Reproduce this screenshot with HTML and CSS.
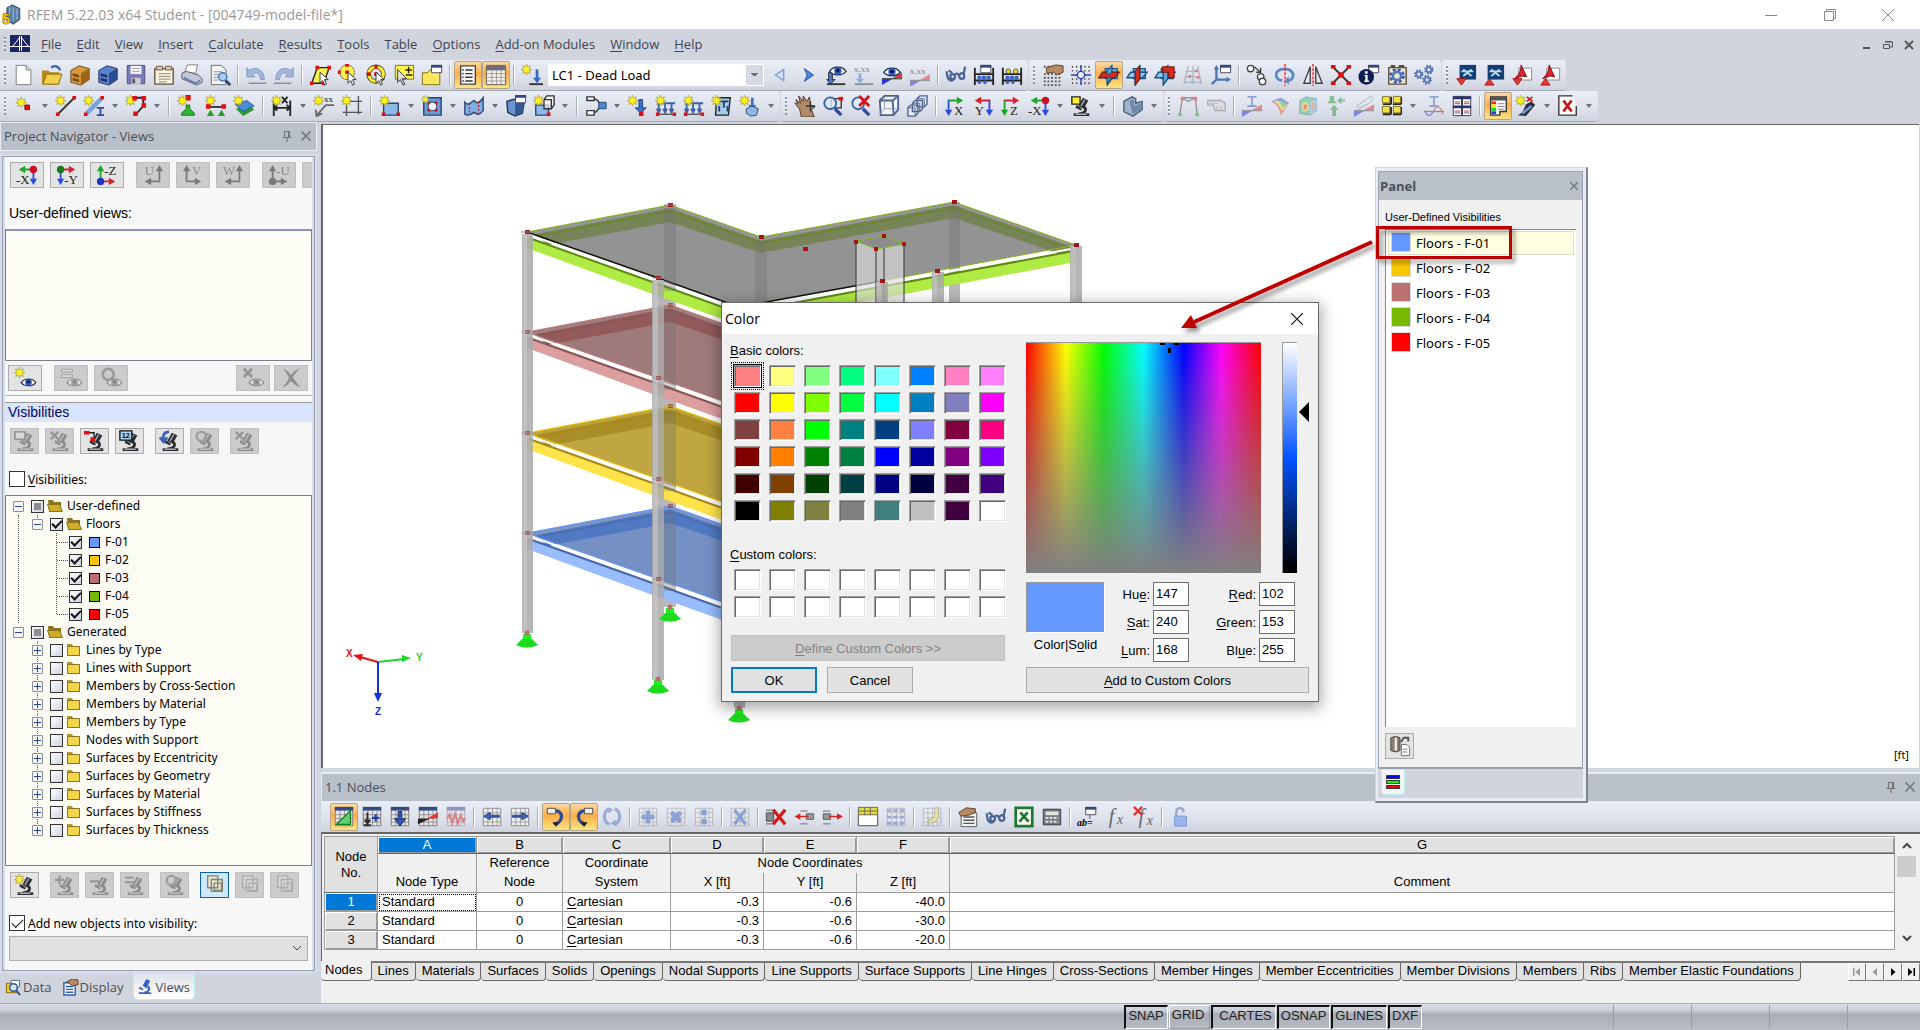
FILE: index.html
```html
<!DOCTYPE html>
<html lang="en">
<head>
<meta charset="utf-8">
<title>RFEM 5.22.03 x64 Student - [004749-model-file*]</title>
<link rel="stylesheet" href="styles.css">
</head>
<body>

<!-- icon library -->
<svg class="defs" aria-hidden="true">
<defs>
<g id="star"><path fill="#fff02a" stroke="#8b8b3c" stroke-width=".6" d="M6 0l1.200 3.200L10.500 2 8.800 5 12 6.200 8.800 7.400l1.500 3L7.200 9 6 12 4.800 9l-3.100 1.400 1.500-3L0 6.200 3.200 5 1.600 2l3.200 1.200z"/></g>
<g id="ar"><path d="M4 5h10V2l7 4-7 4V7H4z"/></g>
<g id="al"><path d="M20 5H10V2L3 6l7 4V7h10z"/></g>
<g id="ad"><path d="M4 6v10H1l4 7 4-7H6V6z"/></g>
<g id="scope"><path fill="#2b2f33" d="M4 20h17v3H4zM14 3l6 3-5 9-6-3zM7 11l6 4-1 2-6-3zM16 12c4 2 3 7-1 9H9v-2c6 0 7-2 6-5z"/><path stroke="#aab2b8" stroke-width="1.500" d="M16 5l-4 7M6 21h12"/></g>
<g id="eye"><path fill="#fff" stroke="#1c2c55" stroke-width="1.400" d="M3 9c4-6 14-6 18 0-4 5-14 5-18 0z"/><circle cx="12" cy="8.500" r="4" fill="#2c56b8"/><circle cx="12" cy="8" r="1.700" fill="#08102a"/></g>
<g id="flag"><path fill="#2b33d8" d="M1 23v-7l12 0z"/><path fill="#e33" d="M23 9v7H11z"/><path stroke="#555" stroke-width="1.500" d="M1 16h22"/></g>
<g id="cursor"><path fill="#fff" stroke="#333" d="M12 9v12l3-3 2 5 2-1-2-5h4z"/></g>
<g id="lens"><path stroke="#2d4c93" stroke-width="3.500" d="M14 15l7 7"/><circle cx="9" cy="9" r="6.500" fill="#dcebfa" fill-opacity=".8" stroke="#3a5fa8" stroke-width="2"/></g>
<g id="win"><path fill="#fff" stroke="#445" d="M11.500 1.500h11v8h-11z"/><path fill="#35477f" d="M11 1h12v3H11z"/></g>
<g id="sheet"><path fill="#e8e8e8" stroke="#777" d="M2.500 1.500h19v20h-19z"/><path stroke="#8a8a8a" d="M2 9.500h20M2 13.500h20M2 17.500h20M7.500 5v16M12.500 5v16M17.500 5v16"/><path fill="#344a85" d="M2 1h20v4H2z"/></g>
<g id="rows"><path fill="#efefef" stroke="#888" d="M2.500 2.500h19v19h-19z"/><path stroke="#999" d="M2 7.500h20M2 12.500h20M2 17.500h20M7.500 2v20M12.500 2v20M17.500 2v20"/></g>
<g id="abac"><path stroke="#222" stroke-width="2" d="M2 4v19M22 4v19M2 11h20M2 18h20"/><g fill="#3e68c8"><circle cx="7" cy="15" r="2.500"/><circle cx="12" cy="15" r="2.500"/><circle cx="17" cy="15" r="2.500"/><circle cx="7" cy="20" r="2"/><circle cx="13" cy="20" r="2"/></g></g>
<g id="dots" fill="#d11"><path d="M1 19h4v4H1zM19 1h4v4h-4z"/></g>
<g id="planes"><path fill="#6fb6e8" stroke="#1c5584" stroke-width="1.500" d="M8 5h13v11H8z"/><path fill="#8cc8f0" stroke="#1c5584" stroke-width="1.500" d="M5 9h18l-5 6H1z"/><path fill="#5ba3d8" stroke="#1c5584" stroke-width="1.500" d="M10 8l5-6v14l-5 7z"/></g>
<g id="gear"><circle cx="12" cy="12" r="7" fill="none" stroke="#3b5ea6" stroke-width="3" stroke-dasharray="3.100 2.400"/><circle cx="12" cy="12" r="4.500" fill="none" stroke="#5578bd" stroke-width="3"/></g>
<g id="cone"><path fill="#2fb52f" stroke="#147014" d="M10 11h4v4l5 5v2H5v-2l5-5z"/></g>
<g id="loads"><path fill="none" stroke="#3b62b0" stroke-width="2" d="M2 9h20M4 9v9M11 9v9M18 9v9M2 15l2 4 2-4M9 15l2 4 2-4M16 15l2 4 2-4"/><path fill="#d11" d="M1 19h4v4H1zM19 19h4v4h-4z"/><path stroke="#555" stroke-width="1.500" d="M5 21h14"/></g>
<g id="squares"><path fill="#e9e6d8" stroke="#85826f" stroke-width="1.500" d="M4 2h11v13H4zM8 6h12v13H8zM11 10h8v8h-8z"/></g>
</defs>
<symbol id="new" viewBox="0 0 24 24"><path fill="#fff" stroke="#777" d="M3.500 1.500h11l5 5v16h-16z"/><path fill="#ddd" stroke="#777" d="M14.500 1.500v5h5"/></symbol>
<symbol id="open" viewBox="0 0 24 24"><path fill="#b88d1c" d="M1 7h7l2 2h10v13H1z"/><path fill="#f3cf4a" stroke="#80600c" d="M2 22l4-11h17l-4 11z"/><path fill="none" stroke="#3462a8" stroke-width="2.500" d="M11 4c4-3 8-2 10 3"/></symbol>
<symbol id="cab" viewBox="0 0 24 24"><path fill="#d69a3c" stroke="#6b4310" d="M2 7l9-5 11 3v12l-9 6-11-3z"/><path fill="#9d6519" d="M13 10l9-5v12l-9 6z"/><path fill="#7a4b12" d="M4 10l7 2v3l-7-2zM4 15l7 2v3l-7-2z"/></symbol>
<symbol id="cabb" viewBox="0 0 24 24"><path fill="#5b82cd" stroke="#1b2d60" d="M2 7l9-5 11 3v12l-9 6-11-3z"/><path fill="#2e4c93" d="M13 10l9-5v12l-9 6z"/><path fill="#1d356e" d="M4 10l7 2v3l-7-2zM4 15l7 2v3l-7-2z"/></symbol>
<symbol id="save" viewBox="0 0 24 24"><path fill="#7d7ab8" stroke="#4b4880" d="M2.500 1.500h19v20h-19z"/><path fill="#f2f2f8" d="M6 2h12v9H6z"/><path fill="#c9c9d8" d="M7 15h10v7H7z"/><path stroke="#99a" d="M8 5h8M8 8h8"/><path fill="#556" d="M8 16h3v5H8z"/></symbol>
<symbol id="clip" viewBox="0 0 24 24"><path fill="#fbf4e3" stroke="#6a5338" stroke-width="1.500" d="M2 5h20v17H2z"/><path fill="#d8ccb2" stroke="#6a5338" d="M3.500 2.500h7v4h-7zM13.500 2.500h7v4h-7z"/><path stroke="#8a8172" d="M6 10.500h13M6 13.500h13M6 16.500h13M6 19.500h9"/></symbol>
<symbol id="print" viewBox="0 0 24 24"><path fill="#fff" stroke="#778" d="M4 9L7 1h11l-2 9z"/><path fill="#c4c8d4" stroke="#556" d="M1 10l5-2 13 4 4 4v4l-6 3-16-7z"/><path fill="#667bb5" d="M3 14l13 6 5-3v2l-5 3-13-6z"/></symbol>
<symbol id="preview" viewBox="0 0 24 24"><path fill="#f4f4f4" stroke="#666" d="M2.500 1.500h11l5 5v16h-16z"/><path stroke="#888" d="M5 8.500h9M5 11.500h6M5 14.500h5M5 17.500h5"/><path stroke="#2b3d70" stroke-width="3" d="M18 18l5 5"/><circle cx="15" cy="14" r="4.500" fill="#a5cdf0" stroke="#4a76b4" stroke-width="1.500"/></symbol>
<symbol id="undo" viewBox="0 0 24 24"><path fill="#a3b8dd" stroke="#7f94bb" d="M2 4v10h9L8 11c4-3 8-1 9 6h4C21 6 12 2 5 7z"/><path stroke="#888" stroke-width="1.500" d="M4 21h19"/></symbol>
<symbol id="redo" viewBox="0 0 24 24"><path fill="#a3b8dd" stroke="#7f94bb" d="M22 4v10h-9l3-3c-4-3-8-1-9 6H3C3 6 12 2 19 7z"/><path stroke="#888" stroke-width="1.500" d="M1 21h19"/></symbol>
<symbol id="selpoly" viewBox="0 0 24 24"><path fill="#fff34a" stroke="#222" stroke-width="1.500" d="M3 21L9 4h13l-6 17z"/><path fill="#d11" d="M1 19h4v4H1zM7 2h4v4H7zM20 2h4v4h-4zM14 19h4v4h-4z"/><use href="#cursor"/></symbol>
<symbol id="selcirc" viewBox="0 0 24 24"><circle cx="11" cy="9" r="8" fill="#fff34a" stroke="#865"/><path fill="#d11" d="M9 7h4v4H9zM1 7h3v4H1zM9 0h4v3H9z"/><use href="#cursor"/></symbol>
<symbol id="selring" viewBox="0 0 24 24"><circle cx="12" cy="11" r="8" fill="none" stroke="#333" stroke-width="5"/><circle cx="12" cy="11" r="8" fill="none" stroke="#ffe92e" stroke-width="3.500"/><path fill="#d11" d="M10 9h4v4h-4zM10 1h4v4h-4zM2 9h4v4H2z"/><use href="#cursor"/></symbol>
<symbol id="selplus" viewBox="0 0 24 24"><path fill="#fff34a" stroke="#665" d="M2.500 1.500h20v15h-20z"/><path stroke="#222" stroke-width="1.500" d="M17 3v7M13.500 6.500h7M14 12h7"/><path fill="#ddd" stroke="#333" d="M5 6v14l3-3 3 6 2-1-3-6h5z"/></symbol>
<symbol id="ywin" viewBox="0 0 24 24"><path fill="#fbe75e" stroke="#7d6a14" d="M1.500 9.500h6l2-3h11v16h-19z"/><use href="#win"/></symbol>
<symbol id="list" viewBox="0 0 24 24"><path fill="#fff" stroke="#444" stroke-width="1.500" d="M4 2h16v20H4z"/><path stroke="#333" stroke-width="1.500" d="M9 6.500h8M9 10.500h8M9 14.500h8M9 18.500h8"/><path stroke="#777" stroke-width="2" stroke-dasharray="2 2" d="M6.500 5.500v15"/></symbol>
<symbol id="tbl" viewBox="0 0 24 24"><path fill="#f6f2ea" stroke="#555" d="M1.500 1.500h21v21h-21z"/><path fill="#6c6f7a" d="M2 2h20v5H2z"/><path stroke="#999" d="M2 10.500h20M2 14.500h20M2 18.500h20M7.500 7v15M12.500 7v15M17.500 7v15"/></symbol>
<symbol id="newlc" viewBox="0 0 24 24"><use href="#star"/><path fill="#3868c8" d="M16 6h3v9h3l-4.500 6L13 15h3z"/><path stroke="#333" stroke-width="2" d="M9 22h15"/></symbol>
<symbol id="prev" viewBox="0 0 24 24"><path fill="#cfe0f8" stroke="#7f9bcf" stroke-width="1.500" d="M16 6v12l-9-6z"/></symbol>
<symbol id="next" viewBox="0 0 24 24"><path fill="#4f86e0" stroke="#2753a5" d="M8 5l10 7-10 7 3-7z"/></symbol>
<symbol id="eyeload" viewBox="0 0 24 24"><path fill="#4c79c8" stroke="#222" d="M4 9h4v8h3l-5 5-4-5h2z"/><g transform="translate(2 -1)"><use href="#eye"/></g><path stroke="#333" stroke-width="2" d="M2 22h20"/></symbol>
<symbol id="xxload" viewBox="0 0 24 24"><text class="ser" x="1" y="9">x.xx</text><path fill="#4c79c8" d="M6 10h3v6h3l-4 5-5-5h3z"/><path stroke="#444" stroke-width="2" d="M2 22h20"/></symbol>
<symbol id="eyeflag" viewBox="0 0 24 24"><use href="#flag"/><use href="#eye"/></symbol>
<symbol id="xxflag" viewBox="0 0 24 24"><text class="ser" x="1" y="11">x.xx</text><g transform="translate(0 2)"><use href="#flag"/></g></symbol>
<symbol id="glass" viewBox="0 0 24 24"><path fill="none" stroke="#4a6496" stroke-width="2.500" d="M2 8c0 9 4 12 7 9 3-2 2-6-1-6s-3 4 0 6M10 12c2-2 4-2 5 0 1 6 6 5 6 1s-4-4-5-1M4 7l4 3M20 12l2-9"/></symbol>
<symbol id="abacw" viewBox="0 0 24 24"><use href="#abac"/><g transform="translate(-3 0)"><use href="#win"/></g></symbol>
<symbol id="abacus" viewBox="0 0 24 24"><use href="#abac"/><g fill="#f0d22a" stroke="#554"><circle cx="8" cy="8" r="2.500"/><circle cx="16" cy="8" r="2.500"/></g></symbol>
<symbol id="handgrid" viewBox="0 0 24 24"><path stroke="#555" stroke-width="2" stroke-dasharray="2 2" d="M2 11h20M2 15h20M2 19h20M2 23h20M2 3h20"/><path fill="#b98a62" stroke="#5d4028" d="M5 4l10-3 8 1v7l-7 3-3-3-8 1z"/></symbol>
<symbol id="snap" viewBox="0 0 24 24"><path stroke="#333" stroke-width="1.500" stroke-dasharray="1.500 3" d="M2 3h20M2 7.500h20M2 16.500h20M2 21h20"/><path stroke="#2a3fb8" stroke-width="1.500" d="M12 1v22M1 12h22"/><circle cx="12" cy="12" r="4" fill="#e8eefc" stroke="#2a3fb8" stroke-width="1.500"/></symbol>
<symbol id="pl1" viewBox="0 0 24 24"><use href="#planes"/><path fill="#d92a1c" stroke="#611" d="M5 9h18l-5 6H1z"/><path fill="#5ba3d8" stroke="#1c5584" d="M10 8l5-6v7l-5 3zM10 15h4l-4 6z"/></symbol>
<symbol id="pl2" viewBox="0 0 24 24"><use href="#planes"/><path fill="#d92a1c" stroke="#611" d="M10 8l5-6v14l-5 7z"/></symbol>
<symbol id="pl3" viewBox="0 0 24 24"><use href="#planes"/><path fill="#d92a1c" stroke="#611" d="M9 3h13v12h-6V9H9z"/></symbol>
<symbol id="persp" viewBox="0 0 24 24"><path fill="none" stroke="#7d8b98" stroke-width="1.500" d="M7 2l-5 20M12 2v20M17 2l4 20M4 8h15M3 14h17M2 20h19"/><path fill="#d22" d="M14 6h3v3h-3zM7 12h3v3H7zM16 13h3v3h-3z"/><path fill="#4ac" d="M10 18h3v3h-3z"/></symbol>
<symbol id="axwin" viewBox="0 0 24 24"><path fill="none" stroke="#4b76b8" stroke-width="2.500" d="M7 5v12h12M7 17l-5 5"/><path fill="#4b76b8" d="M4 6l3-5 3 5zM18 14l5 3-5 3z"/><use href="#win"/></symbol>
<symbol id="copy" viewBox="0 0 24 24"><g fill="#fff" stroke="#444" stroke-width="1.500"><circle cx="5" cy="5" r="3.500"/><circle cx="16" cy="14" r="3.500"/><circle cx="18" cy="19" r="3.500"/></g><path fill="none" stroke="#444" stroke-width="1.500" d="M9 3l7 6M11 9h5V4"/></symbol>
<symbol id="rot" viewBox="0 0 24 24"><path fill="none" stroke="#5b86c8" stroke-width="3" d="M9 18c-8-1-9-9-2-12 6-2 13 0 14 6 0 4-3 6-6 6"/><path fill="#5b86c8" d="M16 13v10l-4-5z"/><path stroke="#e22" stroke-width="1.500" stroke-dasharray="3 1.500" d="M12 0v24"/></symbol>
<symbol id="mirror" viewBox="0 0 24 24"><path fill="#e4e8ee" stroke="#444" stroke-width="1.500" d="M9 3v18H2zM15 3v18h7z"/><path stroke="#e22" stroke-width="1.500" stroke-dasharray="3 1.500" d="M12 0v24"/></symbol>
<symbol id="scale" viewBox="0 0 24 24"><path stroke="#333" stroke-width="2" d="M3 3l18 18M21 3L3 21"/><path fill="#d11" d="M1 1h5v4H1zM18 1h5v4h-5zM1 19h5v4H1zM18 19h5v4h-5zM9 9h6v6H9z"/></symbol>
<symbol id="info" viewBox="0 0 24 24"><use href="#win"/><circle cx="9" cy="14" r="8.500" fill="#101c55"/><path fill="#fff" d="M7.500 8h3v2.500h-3zM7 12h3.500v6H12v1.500H7V18h1v-5H7z"/></symbol>
<symbol id="gearwin" viewBox="0 0 24 24"><path fill="#efe5d3" stroke="#5d4d38" stroke-width="1.500" d="M3 4h19v18H3z"/><path stroke="#5d4d38" stroke-width="3" d="M5 2.500h5M14 2.500h6"/><g transform="translate(0 1)"><use href="#gear"/></g></symbol>
<symbol id="gears" viewBox="0 0 24 24"><g transform="translate(-2 4) scale(.6)"><use href="#gear"/></g><g transform="translate(9 -1) scale(.6)"><use href="#gear"/></g><g transform="translate(7 10) scale(.6)"><use href="#gear"/></g></symbol>
<symbol id="dxfd" viewBox="0 0 24 24"><path fill="#123e74" d="M5 1h18v16H5z"/><path stroke="#bcd8ee" stroke-width="2" d="M9 6l9 7M18 6l-9 7M7 8h13"/><path fill="#e33b36" stroke="#a11" d="M2 16h10l-5 7z"/></symbol>
<symbol id="dxfu" viewBox="0 0 24 24"><path fill="#123e74" d="M5 1h18v16H5z"/><path stroke="#bcd8ee" stroke-width="2" d="M9 6l9 7M18 6l-9 7M7 8h13"/><path fill="#e33b36" stroke="#a11" d="M2 23h10l-5-7z"/></symbol>
<symbol id="pdfd" viewBox="0 0 24 24"><path fill="#fff" stroke="#888" d="M8.500 4.500h14v13h-14z"/><path fill="#d8262a" stroke="#801" d="M11 1l6 13-5-1-8 3c4-4 7-8 7-15z"/><path fill="#e33b36" stroke="#a11" d="M2 16h10l-5 7z"/></symbol>
<symbol id="pdfu" viewBox="0 0 24 24"><path fill="#fff" stroke="#888" d="M8.500 4.500h14v13h-14z"/><path fill="#d8262a" stroke="#801" d="M11 1l6 13-5-1-8 3c4-4 7-8 7-15z"/><path fill="#e33b36" stroke="#a11" d="M2 23h10l-5-7z"/></symbol>

<symbol id="node" viewBox="0 0 24 24"><g transform="translate(3 2)"><use href="#star"/></g><path fill="#d11" stroke="#900" d="M13 11h5v5h-5z"/></symbol>
<symbol id="line" viewBox="0 0 24 24"><use href="#star"/><path stroke="#333" stroke-width="2" d="M3 21L21 3"/><use href="#dots"/></symbol>
<symbol id="member" viewBox="0 0 24 24"><path stroke="#7ba4dc" stroke-width="5" d="M4 20L20 4"/><use href="#star"/><use href="#dots"/><path fill="#2c4ea0" d="M15 13h8v2h-3v6h3v2h-8v-2h3v-6h-3z"/></symbol>
<symbol id="pline" viewBox="0 0 24 24"><path fill="none" stroke="#222" stroke-width="2" d="M8 3h12v9l-8 9"/><use href="#star"/><path fill="#d11" d="M8 1h5v5H8zM18 1h5v5h-5zM18 9h5v5h-5zM9 18h5v5H9z"/></symbol>
<symbol id="sup" viewBox="0 0 24 24"><use href="#cone"/><path fill="#d11" d="M9 0h6v6H9z"/><use href="#star"/></symbol>
<symbol id="lsup" viewBox="0 0 24 24"><use href="#star"/><path stroke="#333" stroke-width="2" d="M4 13h16"/><path fill="#d11" d="M1 10h5v5H1zM18 10h5v5h-5z"/><path fill="#2a9a2a" d="M2 23l4-7 4 7zM14 23l4-7 4 7z"/></symbol>
<symbol id="ssup" viewBox="0 0 24 24"><path fill="#2a9a2a" d="M3 15l8 8 12-7-5-5z"/><path fill="#4a8ad8" stroke="#2a5a9a" d="M3 11l12-5 8 6-12 6z"/><use href="#star"/></symbol>
<symbol id="dim" viewBox="0 0 24 24"><path fill="none" stroke="#222" stroke-width="2" d="M3 6v17M21 6v17M3 14h18M7 11l-4 3 4 3M17 11l4 3-4 3M12 2l6 7M18 2l-6 7"/><use href="#star"/></symbol>
<symbol id="note" viewBox="0 0 24 24"><use href="#star"/><text class="ser" x="12" y="8">xx</text><path fill="none" stroke="#666" stroke-width="2" d="M23 11h-9L5 21M3 16l1 7 6-3"/></symbol>
<symbol id="frame" viewBox="0 0 24 24"><path fill="none" stroke="#555" stroke-width="1.500" d="M6 3v20M19 1v20M2 7h21M2 19h21"/><use href="#star"/></symbol>
<symbol id="surf" viewBox="0 0 24 24"><path fill="#8db9ea" stroke="#26456f" stroke-width="1.500" d="M5 9h16v13H5z"/><use href="#star"/><path fill="#d11" d="M3 19h4v4H3zM19 19h4v4h-4z"/></symbol>
<symbol id="opening" viewBox="0 0 24 24"><path fill="#6d9ad3" stroke="#26456f" stroke-width="1.500" d="M3 3h19v19H3z"/><path fill="#eef3fb" stroke="#26456f" d="M8 8h9v9H8z"/><path fill="#d11" d="M7 7h3v3H7zM15 7h3v3h-3zM7 15h3v3H7zM15 15h3v3h-3z"/><use href="#star" transform="scale(.8)"/></symbol>
<symbol id="curved" viewBox="0 0 24 24"><path fill="#7faee2" stroke="#26456f" stroke-width="1.500" d="M2 8c3 4 6 1 10-2 3 4 6 3 10-3v14c-4 5-6 5-10 2-4 3-7 4-10 2z"/><path stroke="#d11" stroke-width="1.500" stroke-dasharray="2 2" d="M7 9v11M17 7v13"/></symbol>
<symbol id="solid" viewBox="0 0 24 24"><path fill="#6893cf" stroke="#1d3157" stroke-width="1.500" d="M2 7l10-3 9 3-2 13-8 3-8-4z"/><path fill="#35588f" d="M11 9l10-2-2 13-8 3z"/><g transform="translate(0 -1)"><use href="#win"/></g></symbol>
<symbol id="csolid" viewBox="0 0 24 24"><path fill="#8db9ea" stroke="#26456f" stroke-width="1.500" d="M3 11h14v11H3z"/><path fill="#fff" fill-opacity=".6" stroke="#333" stroke-width="1.500" d="M12 5h8v10h-8zM12 5l3-4h8v10l-3 4"/><use href="#star"/><path fill="#d11" d="M15 19h4v4h-4z"/></symbol>
<symbol id="conn" viewBox="0 0 24 24"><path fill="#fff" stroke="#333" stroke-width="1.500" d="M2 2h8v4H2zM2 17h8v5H2z"/><path fill="none" stroke="#333" stroke-width="1.500" d="M10 4c6 1 5 7 8 7M10 19c5 0 4-7 8-7"/><path fill="#4a86d8" stroke="#26456f" d="M15 8h8v7h-8z"/></symbol>
<symbol id="nload" viewBox="0 0 24 24"><use href="#star"/><path fill="#3f6fc4" stroke="#1d3f80" d="M13 5h4v9h4l-6 6-6-6h4z"/><path fill="#d11" d="M13 18h5v5h-5z"/></symbol>
<symbol id="lload" viewBox="0 0 24 24"><use href="#loads"/><use href="#star"/></symbol>
<symbol id="sload" viewBox="0 0 24 24"><path fill="#a9cdef" stroke="#222" stroke-width="1.500" d="M6 3h15l-2 19H5z"/><path stroke="#223c70" stroke-width="2" d="M9 7h10M9 12v6M14 7v7M18 12v6"/><use href="#star"/></symbol>
<symbol id="vload" viewBox="0 0 24 24"><use href="#star"/><path fill="#3f6fc4" d="M13 3h3v8h3l-4.500 5L10 11h3z"/><path fill="#8db9ea" stroke="#26456f" d="M8 15l6-3 7 3-2 7-6 1-5-3z"/></symbol>
<symbol id="pan" viewBox="0 0 24 24"><path fill="#b08a68" stroke="#4a3524" d="M2 5l5 4-2-8 5 6 0-6 4 6 3-5 1 9 5 2-4 3 3 8H8L6 15 1 9h3z"/><path stroke="#333" stroke-width="1.500" d="M13 12h10M18 7v11"/></symbol>
<symbol id="zoom" viewBox="0 0 24 24"><path fill="none" stroke="#333" stroke-width="1.500" d="M10 4h11v10H10z"/><use href="#lens"/><path fill="#d11" d="M18 2h5v4h-5z"/></symbol>
<symbol id="zoomx" viewBox="0 0 24 24"><use href="#lens"/><path stroke="#d11" stroke-width="3" d="M10 1l11 11M21 1L10 12"/></symbol>
<symbol id="cub" viewBox="0 0 24 24"><path fill="#f4f6fa" stroke="#4f628f" stroke-width="2" d="M2 6l5-5h15v15l-5 6H3z"/><path fill="none" stroke="#4f628f" stroke-width="2" d="M2 6h14l1 16M16 6l6-5"/><path fill="none" stroke="#8898bb" d="M7 2v13h14M7 15l-5 6"/></symbol>
<symbol id="cubm" viewBox="0 0 24 24"><path fill="#e3e7f2" stroke="#4f628f" stroke-width="1.500" d="M12 4l3-3h8v9l-3 3h-8zM7 9l3-3h8v9l-3 3H7zM2 14l3-3h8v9l-3 3H2z"/><path fill="none" stroke="#4f628f" d="M2 14h8v9M7 9h8v9M12 4h8v9"/></symbol>
<symbol id="vx" viewBox="0 0 24 24"><use href="#ar" fill="#1fa52c"/><use href="#ad" fill="#2a4be0"/><text class="let" x="11" y="22">X</text></symbol>
<symbol id="vy" viewBox="0 0 24 24"><use href="#al" fill="#d8202c"/><use href="#ad" fill="#2a4be0" x="14"/><text class="let" x="3" y="22">Y</text></symbol>
<symbol id="vz" viewBox="0 0 24 24"><use href="#ar" fill="#d8202c"/><use href="#ad" fill="#1fa52c"/><text class="let" x="11" y="22">Z</text></symbol>
<symbol id="vnx" viewBox="0 0 24 24"><use href="#al" fill="#1fa52c"/><use href="#ad" fill="#2a4be0" x="14"/><circle cx="19" cy="6" r="4" fill="#c8102a"/><text class="let" x="0" y="22">-X</text></symbol>
<symbol id="vny" viewBox="0 0 24 24"><use href="#ar" fill="#d8202c"/><use href="#ad" fill="#2a4be0"/><circle cx="5" cy="6" r="4" fill="#147a1c"/><text class="let" x="9" y="22">-Y</text></symbol>
<symbol id="vnz" viewBox="0 0 24 24"><path fill="#1fa52c" d="M4 18V8H1l4-7 4 7H6v10z"/><use href="#ar" fill="#d8202c" y="13"/><circle cx="5" cy="19" r="4" fill="#1c34c8"/><text class="let" x="9" y="12">-Z</text></symbol>
<symbol id="vu" viewBox="0 0 24 24"><path d="M18 18V8h-3l4-7 4 7h-3v10z"/><use href="#al" y="13"/><text class="let" x="3" y="12">U</text></symbol>
<symbol id="vv" viewBox="0 0 24 24"><path d="M4 18V8H1l4-7 4 7H6v10z"/><use href="#ar" y="13"/><text class="let" x="11" y="12">V</text></symbol>
<symbol id="vw" viewBox="0 0 24 24"><path d="M18 18V8h-3l4-7 4 7h-3v10z"/><use href="#al" y="13"/><text class="let" x="1" y="12">W</text></symbol>
<symbol id="vnu" viewBox="0 0 24 24"><path d="M4 18V8H1l4-7 4 7H6v10z"/><use href="#ar" y="13"/><circle cx="5" cy="19" r="4"/><text class="let" x="9" y="12">-U</text></symbol>
<symbol id="micy" viewBox="0 0 24 24"><use href="#scope"/><path fill="#fff02a" stroke="#222" stroke-width="1.500" d="M2 2h9v8H2z"/></symbol>
<symbol id="micbox" viewBox="0 0 24 24"><use href="#scope"/><path fill="#eee" stroke="#222" stroke-width="1.500" d="M1 2h11v8H1z"/></symbol>
<symbol id="micred" viewBox="0 0 24 24"><use href="#scope"/><path fill="none" stroke="#222" stroke-width="1.500" d="M3 3h8v7"/><path fill="#d11" d="M0 1h6v4H0zM7 8h5v4H7z"/></symbol>
<symbol id="micnum" viewBox="0 0 24 24"><use href="#scope"/><path fill="#a7d8f8" stroke="#111" stroke-width="1.500" d="M1 1h13v10H1z"/><text class="num12" x="3" y="9">12</text></symbol>
<symbol id="micback" viewBox="0 0 24 24"><use href="#scope"/><path fill="none" stroke="#3f63b0" stroke-width="3" d="M11 2C5 2 4 6 5 12M1 8l4 5 4-5"/></symbol>
<symbol id="micring" viewBox="0 0 24 24"><use href="#scope"/><circle cx="8" cy="7" r="5" fill="none" stroke="#555" stroke-width="2.500"/></symbol>
<symbol id="micx" viewBox="0 0 24 24"><use href="#scope"/><path stroke="#444" stroke-width="2.500" d="M2 2l8 8M10 2l-8 8"/></symbol>
<symbol id="micstar" viewBox="0 0 24 24"><use href="#scope"/><use href="#star"/></symbol>
<symbol id="micplus" viewBox="0 0 24 24"><use href="#scope"/><path stroke="#444" stroke-width="2.500" d="M6 2v9M1 6.500h10"/></symbol>
<symbol id="micminus" viewBox="0 0 24 24"><use href="#scope"/><path stroke="#444" stroke-width="2.500" d="M1 8h10"/></symbol>
<symbol id="miceq" viewBox="0 0 24 24"><use href="#scope"/><path stroke="#444" stroke-width="2" d="M1 4h10M1 9h10"/></symbol>
<symbol id="sq" viewBox="0 0 24 24"><use href="#squares"/></symbol>
<symbol id="eyestar" viewBox="0 0 24 24"><use href="#star"/><g transform="translate(5 9) scale(.9)"><use href="#eye"/></g></symbol>
<symbol id="eyeeq" viewBox="0 0 24 24"><path fill="#eee" stroke="#555" d="M1.500 2.500h12v3h-12zM1.500 8.500h12v3h-12z"/><g transform="translate(5 9) scale(.9)"><use href="#eye"/></g></symbol>
<symbol id="eyering" viewBox="0 0 24 24"><circle cx="9" cy="8" r="6" fill="none" stroke="#555" stroke-width="3"/><g transform="translate(5 9) scale(.9)"><use href="#eye"/></g></symbol>
<symbol id="eyex" viewBox="0 0 24 24"><path stroke="#444" stroke-width="3" d="M2 2l9 9M11 2l-9 9"/><g transform="translate(5 9) scale(.9)"><use href="#eye"/></g></symbol>
<symbol id="bigx" viewBox="0 0 24 24"><path fill="#333" d="M3 2c4 1 7 4 9 7 2-3 5-6 10-8-4 4-6 7-8 10 2 4 5 7 8 11-4-1-8-4-10-7-2 3-5 6-10 8 4-4 6-8 8-11C8 8 6 5 3 2z"/></symbol>
<symbol id="lsolid" viewBox="0 0 24 24"><path fill="#9fb4cc" stroke="#4a5f7c" stroke-width="1.500" d="M2 7l9-5 4 2v5l7-2v9l-10 7-10-5z"/><path fill="#6f88a8" d="M8 7l5-3v8l8-3v6l-9 6z"/></symbol>
<symbol id="frm" viewBox="0 0 24 24"><path fill="none" stroke="#444" stroke-width="1.500" d="M3 22L6 3h14l2 19M6 3l6 4 8-4"/><path fill="#d22" d="M4 2h4v4H4zM18 2h4v4h-4z"/><path fill="#2a2" d="M1 20h4v3H1zM20 20h4v3h-4z"/></symbol>
<symbol id="chip" viewBox="0 0 24 24"><path fill="#d9d9d9" stroke="#777" stroke-width="1.500" d="M3 6h14l5 3v8h-11l-2-6H3z"/><path stroke="#888" d="M5 9h10M13 12v4M17 12v4"/></symbol>
<symbol id="ibeam" viewBox="0 0 24 24"><path fill="#3f5fae" d="M7 1h10v2h-4v8h4v2H7v-2h4V3H7z"/><g transform="translate(0 1)"><use href="#flag"/></g></symbol>
<symbol id="rain" viewBox="0 0 24 24"><path fill="#e8442a" d="M2 7l11-4 9 6-9 13C11 12 7 9 2 7z"/><path fill="#f5d631" d="M5 7l8-3 9 5-8 9c-2-6-5-9-9-11z"/><path fill="#42c25c" d="M9 6l4-1 9 4-7 5c-1-4-3-6-6-8z"/><path fill="#3b62dc" d="M2 7l11-4 9 6-4 1-5-4z"/></symbol>
<symbol id="rcube" viewBox="0 0 24 24"><path fill="#4cc07c" stroke="#3a6a8a" d="M3 6l7-4 11 2v13l-7 5-11-2z"/><path fill="#7bb8e8" d="M14 8l7-4v13l-7 5z"/><ellipse cx="9" cy="13" rx="4" ry="5" fill="#f0d832"/><ellipse cx="9" cy="13" rx="2" ry="3" fill="#e23a2a"/><ellipse cx="17" cy="12" rx="2" ry="4" fill="#f08a32"/></symbol>
<symbol id="react" viewBox="0 0 24 24"><path fill="#2f9a3a" d="M8 23v-7H5l5-5 5 5h-3v7zM22 5h-4V2l-5 4 5 4V7h4zM5 1h5v5l3 3H2l3-3z"/></symbol>
<symbol id="knife" viewBox="0 0 24 24"><path fill="#dfe7ee" stroke="#677" d="M4 12L20 1c3 2 1 6-3 8L7 15z"/><g transform="translate(0 1)"><use href="#flag"/></g></symbol>
<symbol id="blocks" viewBox="0 0 24 24"><path stroke="#222" stroke-width="2" d="M2 10h9M13 10h9M2 21h9M13 21h9M11 2v8M22 2v8M11 13v8M22 13v8"/><path fill="#f5e045" stroke="#7a6c20" d="M1.500 1.500h8v7h-8zM13.500 1.500h8v7h-8zM1.500 12.500h8v7h-8zM13.500 12.500h8v7h-8z"/></symbol>
<symbol id="idia" viewBox="0 0 24 24"><path fill="#3f5fae" d="M7 1h10v2h-4v8h4v2H7v-2h4V3H7z"/><path fill="none" stroke="#33c" stroke-width="1.500" d="M2 17c3 8 6 6 10 0"/><path fill="none" stroke="#e33" stroke-width="1.500" d="M12 17c3-7 7-5 10 4"/><path stroke="#444" stroke-width="1.500" d="M1 18h22"/></symbol>
<symbol id="tbls" viewBox="0 0 24 24"><path fill="#fff" stroke="#333" d="M2.500 1.500h19v21h-19z"/><path stroke="#25357a" stroke-width="3" d="M2 3h20M2 13h20"/><path stroke="#b33" d="M4 7.500h6M14 7.500h6M4 17.500h6M14 17.500h6"/><path stroke="#556" d="M4 9.500h6M14 9.500h6M4 19.500h6M14 19.500h6"/><path stroke="#333" stroke-width="2" d="M12 2v20"/></symbol>
<symbol id="panel" viewBox="0 0 24 24"><path fill="#fff" stroke="#333" stroke-width="1.500" d="M4 2h17v16h-7v4H4z"/><path fill="#555" d="M4 2h17v4H4z"/><path fill="#e22" d="M5 7h5v3H5z"/><path fill="#ee2" d="M5 10h5v4H5z"/><path fill="#2c3" d="M5 14h5v4H5z"/><path fill="#24d" d="M5 18h5v3H5z"/><path stroke="#777" d="M12 9.500h7M12 12.500h7M12 15.500h7"/></symbol>
<symbol id="micwand" viewBox="0 0 24 24"><use href="#star"/><path fill="#2b2f33" d="M12 10l6-3 4 4-10 12-9-1 5-3z"/><path stroke="#6f9ad3" stroke-width="3" d="M8 20l10-8"/><path stroke="#c22" stroke-width="2" d="M13 2l6 5M19 2l-6 5"/></symbol>
<symbol id="delbox" viewBox="0 0 24 24"><path fill="#fff" stroke="#333" stroke-width="1.500" d="M17 1H2v21h19V12"/><path stroke="#c01818" stroke-width="3" d="M7 6l9 12M16 6L7 18"/></symbol>

<symbol id="t1" viewBox="0 0 24 24"><use href="#sheet"/><path fill="#5fd06a" stroke="#1c7a2a" stroke-width="1.500" d="M4 20L19 5v15z"/></symbol>
<symbol id="t2" viewBox="0 0 24 24"><use href="#sheet"/><path stroke="#2a2a2a" stroke-width="2" d="M7 7v11M4 15l3 4 3-4M3 21h8"/><path stroke="#1d3fa8" stroke-width="2.500" d="M16 9v8M12 13h8"/></symbol>
<symbol id="t3" viewBox="0 0 24 24"><use href="#sheet"/><path fill="#2f56b8" stroke="#14295e" d="M10 6h4v8h4l-6 8-6-8h4z"/></symbol>
<symbol id="t4" viewBox="0 0 24 24"><use href="#sheet"/><path fill="#e33" d="M23 7v6l-13 1z"/><path fill="#222" d="M1 20v-6h13z"/></symbol>
<symbol id="t5" viewBox="0 0 24 24"><use href="#sheet"/><path fill="none" stroke="#d22" stroke-width="2" d="M2 14l3-5 3 10 3-11 3 11 3-9 3 7 2-4"/></symbol>
<symbol id="t6" viewBox="0 0 24 24"><use href="#rows"/><use href="#al" fill="#3a63c0" stroke="#23408a" y="5"/></symbol>
<symbol id="t7" viewBox="0 0 24 24"><use href="#rows"/><use href="#ar" fill="#3a63c0" stroke="#23408a" y="5"/></symbol>
<symbol id="t8" viewBox="0 0 24 24"><path fill="#eee" stroke="#444" d="M2.500 2.500h9v6h-9z"/><path fill="none" stroke="#2a4a9a" stroke-width="3.500" d="M12 5c8 2 8 10 0 15"/><path fill="#222" d="M15 17l-7 1 4 5z"/></symbol>
<symbol id="t9" viewBox="0 0 24 24"><path fill="#eee" stroke="#444" d="M12.500 2.500h9v6h-9z"/><path fill="none" stroke="#2a4a9a" stroke-width="3.500" d="M12 5c-8 2-8 10 0 15"/><path fill="#222" d="M16 18l-7-1 3 6z"/></symbol>
<symbol id="t10" viewBox="0 0 24 24"><path fill="none" stroke="#5578bd" stroke-width="3.500" d="M9 3C2 6 2 17 9 20M15 3c7 3 7 14 0 17"/><path fill="#5578bd" d="M7 1l7 3-6 4zM17 22l-7-3 6-4z"/></symbol>
<symbol id="t11" viewBox="0 0 24 24"><use href="#rows"/><path stroke="#3a63c0" stroke-width="5" d="M12 5v14M5 12h14"/></symbol>
<symbol id="t12" viewBox="0 0 24 24"><use href="#rows"/><path stroke="#3a63c0" stroke-width="5" d="M7 7l10 10M17 7L7 17"/></symbol>
<symbol id="t13" viewBox="0 0 24 24"><use href="#rows"/><path fill="#3a63c0" d="M9 4h6v6H9zM9 14h6v6H9z"/></symbol>
<symbol id="t14" viewBox="0 0 24 24"><use href="#rows"/><path stroke="#3a63c0" stroke-width="3.500" d="M6 4l12 16M18 4L6 20"/></symbol>
<symbol id="t15" viewBox="0 0 24 24"><path fill="#888" stroke="#444" d="M1.500 7.500h8v9h-8z"/><path stroke="#555" d="M1 4.500h10M1 19.500h10"/><path stroke="#d01818" stroke-width="3.500" d="M9 4l13 16M22 4L9 20"/></symbol>
<symbol id="t16" viewBox="0 0 24 24"><path fill="#999" stroke="#555" d="M14.500 8.500h8v6h-8z"/><path stroke="#666" d="M8 5.500h8M8 19.500h8"/><g transform="translate(-1 6) scale(.9)"><use href="#al" fill="#d22"/></g></symbol>
<symbol id="t17" viewBox="0 0 24 24"><path fill="#999" stroke="#555" d="M2.500 8.500h8v6h-8z"/><path stroke="#666" d="M2 5.500h8M2 19.500h8"/><g transform="translate(5 6) scale(.9)"><use href="#ar" fill="#d22"/></g></symbol>
<symbol id="t18" viewBox="0 0 24 24"><path fill="#fff" stroke="#444" d="M1.500 1.500h21v20h-21z"/><path fill="#e8dc3a" d="M2 2h20v8H2z"/><path stroke="#666" d="M2 5.500h20M2 9.500h20M8.500 2v8M14.500 2v8"/></symbol>
<symbol id="t19" viewBox="0 0 24 24"><use href="#rows"/><path stroke="#5a6fd0" stroke-width="3" stroke-dasharray="5 2" d="M2 5h20M2 12h20M2 19h20"/></symbol>
<symbol id="t20" viewBox="0 0 24 24"><use href="#rows"/><path fill="#f2e23a" stroke="#777" d="M15 2h4v9c0 5-4 7-8 7l-3 3V14l3 1c3-2 4-4 4-7z"/></symbol>
<symbol id="t21" viewBox="0 0 24 24"><path fill="#f2f2f2" stroke="#555" d="M4.500 7.500h17v15h-17z"/><path stroke="#555" stroke-width="1.500" d="M7 12h12M7 15.500h12M7 19h12"/><path fill="#b98a62" stroke="#5d4028" d="M2 7l8-5 10 1v4l-7 3-9 1z"/></symbol>
<symbol id="xls" viewBox="0 0 24 24"><path fill="#fff" stroke="#1d7a2c" stroke-width="3" d="M3 2h18v20H3z"/><path stroke="#1d7a2c" stroke-width="3" d="M8 7l9 10M16 7L7 17"/></symbol>
<symbol id="calc" viewBox="0 0 24 24"><path fill="#777b82" stroke="#333" d="M2.500 3.500h19v17h-19z"/><path fill="#dfe8dd" d="M5 6h14v4H5z"/><path stroke="#eee" stroke-width="2" stroke-dasharray="3 1.500" d="M5 13h14M5 17h14"/></symbol>
<symbol id="abw" viewBox="0 0 24 24"><g transform="translate(-2 0)"><use href="#win"/></g><path stroke="#445" d="M14 10v4"/><text class="abt" x="0" y="22">ab=</text></symbol>
<symbol id="fx" viewBox="0 0 24 24"><text class="fxt" x="4" y="18">f</text><text class="fxs" x="13" y="20">x</text></symbol>
<symbol id="fxx" viewBox="0 0 24 24"><text class="fxt" x="6" y="18">f</text><text class="fxs" x="15" y="21">x</text><path stroke="#d33" stroke-width="2.500" d="M1 1l9 9M10 1L1 10"/></symbol>
<symbol id="lock" viewBox="0 0 24 24"><path fill="none" stroke="#9aa6c8" stroke-width="2.500" d="M8 11V6c0-5 8-5 8 1"/><path fill="#9db4ee" stroke="#7f98d6" d="M6 11h13v11H6z"/></symbol>
<symbol id="folder" viewBox="0 0 16 14"><path fill="#b8942a" d="M1 1h5l1 2h7v10H1z"/><path fill="#f2d548" stroke="#8e7420" d="M1.500 3.500h12v9h-12z"/></symbol>
<symbol id="folderopen" viewBox="0 0 16 14"><path fill="#8e7420" d="M1 1h5l1 2h7v10H2z"/><path fill="#d2ae28" stroke="#8e7420" d="M3 12.500L.500 5.500h12l3 7z"/></symbol>
<symbol id="pin" viewBox="0 0 12 12"><path fill="none" stroke="#777" stroke-width="1.200" d="M3.500 1v6M8.500 1v6M7.500 1v6M3 1.500h6M1.500 7.500h9M6 8v4"/></symbol>
<symbol id="x" viewBox="0 0 12 12"><path stroke="#777" stroke-width="1.700" d="M1.500 1.500l9 9M10.500 1.500l-9 9"/></symbol>
</svg>

<header class="titlebar">
  <svg class="applogo" viewBox="0 0 20 24"><path fill="#5b7fa8" stroke="#27405f" d="M5 4l6-3 8 4v12l-7 5-7-4z"/><path stroke="#a8c1dd" d="M8 3v8M12 4v14M16 5v12"/><text x="0" y="22" class="five">5</text></svg>
  <span class="apptitle">RFEM 5.22.03 x64 Student - [004749-model-file*]</span>
  <div class="winbtns">
    <button aria-label="Minimize"><svg viewBox="0 0 12 12"><path stroke="#888" d="M0 6.500h12"/></svg></button>
    <button aria-label="Restore"><svg viewBox="0 0 12 12"><path fill="none" stroke="#888" d="M.500 2.500h9v9h-9zM2.500 2v-1.500h9v9H10"/></svg></button>
    <button aria-label="Close"><svg viewBox="0 0 12 12"><path stroke="#888" d="M0 0l12 12M12 0L0 12"/></svg></button>
  </div>
</header>

<nav class="menubar">
  <span class="grip"></span>
  <svg class="doclogo" viewBox="0 0 20 17"><path fill="#1d2560" d="M0 0h20v17H0z"/><path fill="none" stroke="#fff" d="M0 11.500h20M9.500 1v15M11.500 1v15M10 2l-7 9M11 2l7 9"/></svg>
  <a href="#"><u>F</u>ile</a><a href="#"><u>E</u>dit</a><a href="#"><u>V</u>iew</a><a href="#"><u>I</u>nsert</a><a href="#"><u>C</u>alculate</a><a href="#"><u>R</u>esults</a><a href="#"><u>T</u>ools</a><a href="#">Ta<u>b</u>le</a><a href="#"><u>O</u>ptions</a><a href="#"><u>A</u>dd-on Modules</a><a href="#"><u>W</u>indow</a><a href="#"><u>H</u>elp</a>
  <div class="mdibtns">
    <button aria-label="Minimize document"><svg viewBox="0 0 10 10"><path stroke="#555" stroke-width="2" d="M1 8h7"/></svg></button>
    <button aria-label="Restore document"><svg viewBox="0 0 10 10"><path fill="none" stroke="#555" d="M.500 4.500h6v4h-6zM2 2h7.500v5H7M2 1.500h7"/></svg></button>
    <button aria-label="Close document"><svg viewBox="0 0 10 10"><path stroke="#555" stroke-width="1.800" d="M1 1l8 8M9 1L1 9"/></svg></button>
  </div>
</nav>

<div class="toolrow row1">
  <div class="toolbar"><span class="grip"></span>
    <button class="t" title="New"><svg><use href="#new"/></svg></button>
    <button class="t" title="Open"><svg><use href="#open"/></svg></button>
    <button class="t" title="Project manager"><svg><use href="#cab"/></svg></button>
    <button class="t" title="Block manager"><svg><use href="#cabb"/></svg></button>
    <button class="t" title="Save"><svg><use href="#save"/></svg></button>
    <button class="t" title="Clipboard"><svg><use href="#clip"/></svg></button>
    <button class="t" title="Print"><svg><use href="#print"/></svg></button>
    <button class="t" title="Preview"><svg><use href="#preview"/></svg></button>
    <i class="sep"></i>
    <button class="t" title="Undo"><svg><use href="#undo"/></svg></button>
    <button class="t" title="Redo"><svg><use href="#redo"/></svg></button>
    <i class="sep"></i>
    <button class="t" title="Select by polygon"><svg><use href="#selpoly"/></svg></button>
    <button class="t" title="Select by circle"><svg><use href="#selcirc"/></svg></button>
    <button class="t" title="Select by ring"><svg><use href="#selring"/></svg></button>
    <button class="t" title="Add to selection"><svg><use href="#selplus"/></svg></button>
    <button class="t" title="Special selection"><svg><use href="#ywin"/></svg></button>
    <i class="sep"></i>
    <button class="t on" title="Navigator"><svg><use href="#list"/></svg></button>
    <button class="t on" title="Tables"><svg><use href="#tbl"/></svg></button>
    <i class="sep"></i>
    <button class="t" title="New load case"><svg><use href="#newlc"/></svg></button>
    <select class="loadcase" aria-label="Load case"><option>LC1 - Dead Load</option></select>
    <button class="t" title="Previous"><svg><use href="#prev"/></svg></button>
    <button class="t" title="Next"><svg><use href="#next"/></svg></button>
    <button class="t" title="Show loads"><svg><use href="#eyeload"/></svg></button>
    <button class="t off" title="Load values"><svg><use href="#xxload"/></svg></button>
    <button class="t" title="Show results"><svg><use href="#eyeflag"/></svg></button>
    <button class="t off" title="Result values"><svg><use href="#xxflag"/></svg></button>
    <i class="sep"></i>
    <button class="t" title="Check"><svg><use href="#glass"/></svg></button>
    <button class="t" title="Calculation parameters"><svg><use href="#abacw"/></svg></button>
    <button class="t" title="Calculate"><svg><use href="#abacus"/></svg></button>
  </div>
  <div class="toolbar"><span class="grip"></span>
    <button class="t" title="Edit grid"><svg><use href="#handgrid"/></svg></button>
    <button class="t" title="Snap"><svg><use href="#snap"/></svg></button>
    <button class="t on" title="Plane XY"><svg><use href="#pl1"/></svg></button>
    <button class="t" title="Plane YZ"><svg><use href="#pl2"/></svg></button>
    <button class="t" title="Plane XZ"><svg><use href="#pl3"/></svg></button>
    <button class="t off" title="Work plane grid"><svg><use href="#persp"/></svg></button>
    <button class="t" title="Coordinate system"><svg><use href="#axwin"/></svg></button>
    <i class="sep"></i>
    <button class="t" title="Move/copy"><svg><use href="#copy"/></svg></button>
    <button class="t" title="Rotate"><svg><use href="#rot"/></svg></button>
    <button class="t" title="Mirror"><svg><use href="#mirror"/></svg></button>
    <button class="t" title="Scale"><svg><use href="#scale"/></svg></button>
    <button class="t" title="Info"><svg><use href="#info"/></svg></button>
    <button class="t" title="Settings"><svg><use href="#gearwin"/></svg></button>
    <button class="t" title="Options"><svg><use href="#gears"/></svg></button>
  </div>
  <div class="toolbar"><span class="grip"></span>
    <button class="t" title="DXF import"><svg><use href="#dxfd"/></svg></button>
    <button class="t" title="DXF export"><svg><use href="#dxfu"/></svg></button>
    <button class="t" title="File import"><svg><use href="#pdfd"/></svg></button>
    <button class="t" title="File export"><svg><use href="#pdfu"/></svg></button>
  </div>
</div>

<div class="toolrow row2">
  <div class="toolbar"><span class="grip"></span>
    <button class="t" title="Node"><svg><use href="#node"/></svg></button><button class="dd" aria-label="More nodes"></button>
    <button class="t" title="Line"><svg><use href="#line"/></svg></button>
    <button class="t" title="Member"><svg><use href="#member"/></svg></button><button class="dd" aria-label="More members"></button>
    <button class="t" title="Polyline"><svg><use href="#pline"/></svg></button><button class="dd" aria-label="More lines"></button>
    <i class="sep"></i>
    <button class="t" title="Nodal support"><svg><use href="#sup"/></svg></button>
    <button class="t" title="Line support"><svg><use href="#lsup"/></svg></button>
    <button class="t" title="Surface support"><svg><use href="#ssup"/></svg></button>
    <i class="sep"></i>
    <button class="t" title="Dimension"><svg><use href="#dim"/></svg></button><button class="dd" aria-label="More dimensions"></button>
    <button class="t" title="Comment"><svg><use href="#note"/></svg></button>
    <button class="t" title="Guideline"><svg><use href="#frame"/></svg></button>
    <i class="sep"></i>
    <button class="t" title="Surface"><svg><use href="#surf"/></svg></button><button class="dd" aria-label="More surfaces"></button>
    <button class="t" title="Opening"><svg><use href="#opening"/></svg></button><button class="dd" aria-label="More openings"></button>
    <button class="t" title="Curved surface"><svg><use href="#curved"/></svg></button><button class="dd" aria-label="More curved surfaces"></button>
    <button class="t" title="Solid"><svg><use href="#solid"/></svg></button>
    <button class="t" title="Extrude"><svg><use href="#csolid"/></svg></button><button class="dd" aria-label="More solids"></button>
    <i class="sep"></i>
    <button class="t" title="Connection"><svg><use href="#conn"/></svg></button><button class="dd" aria-label="More connections"></button>
    <button class="t" title="Nodal load"><svg><use href="#nload"/></svg></button>
    <button class="t" title="Member load"><svg><use href="#lload"/></svg></button>
    <button class="t" title="Line load"><svg><use href="#lload"/></svg></button>
    <button class="t" title="Surface load"><svg><use href="#sload"/></svg></button>
    <button class="t" title="Solid load"><svg><use href="#vload"/></svg></button><button class="dd" aria-label="More loads"></button>
  </div>
  <div class="toolbar"><span class="grip"></span>
    <button class="t" title="Pan"><svg><use href="#pan"/></svg></button>
    <button class="t" title="Zoom"><svg><use href="#zoom"/></svg></button>
    <button class="t" title="Zoom all"><svg><use href="#zoomx"/></svg></button>
    <button class="t" title="Isometric"><svg><use href="#cub"/></svg></button>
    <button class="t" title="Multiple views"><svg><use href="#cubm"/></svg></button>
    <i class="sep"></i>
    <button class="t" title="View in X"><svg><use href="#vx"/></svg></button>
    <button class="t" title="View in Y"><svg><use href="#vy"/></svg></button>
    <button class="t" title="View in Z"><svg><use href="#vz"/></svg></button>
    <button class="t" title="View in -X"><svg><use href="#vnx"/></svg></button><button class="dd" aria-label="More views"></button>
    <button class="t" title="Visibility"><svg><use href="#micy"/></svg></button><button class="dd" aria-label="More visibilities"></button>
    <i class="sep"></i>
    <button class="t" title="Rendering"><svg><use href="#lsolid"/></svg></button><button class="dd" aria-label="More rendering"></button>
  </div>
  <div class="toolbar results"><span class="grip"></span>
    <button class="t off" title="Deformation"><svg><use href="#frm"/></svg></button>
    <button class="t off" title="Animation"><svg><use href="#chip"/></svg></button>
    <i class="sep"></i>
    <button class="t off" title="Member results"><svg><use href="#ibeam"/></svg></button>
    <button class="t off" title="Surface results"><svg><use href="#rain"/></svg></button>
    <button class="t off" title="Solid results"><svg><use href="#rcube"/></svg></button>
    <button class="t off" title="Reactions"><svg><use href="#react"/></svg></button>
    <button class="t off" title="Sections"><svg><use href="#knife"/></svg></button>
    <button class="t" title="Smoothing"><svg><use href="#blocks"/></svg></button><button class="dd" aria-label="More smoothing"></button>
    <button class="t off" title="Result diagram"><svg><use href="#idia"/></svg></button>
    <button class="t" title="Result tables"><svg><use href="#tbls"/></svg></button>
    <i class="sep"></i>
    <button class="t on" title="Control panel"><svg><use href="#panel"/></svg></button>
    <button class="t" title="New section"><svg><use href="#micwand"/></svg></button><button class="dd" aria-label="More sections"></button>
    <button class="t" title="Delete"><svg><use href="#delbox"/></svg></button><button class="dd" aria-label="More delete"></button>
  </div>
</div>

<div class="workspace">
  <aside class="navigator">
    <div class="panehead"><span>Project Navigator - Views</span><button aria-label="Pin"><svg><use href="#pin"/></svg></button><button aria-label="Close"><svg><use href="#x"/></svg></button></div>
    <div class="navbody">
      <div class="btnrow top">
        <button class="b" title="-X"><svg><use href="#vnx"/></svg></button>
        <button class="b" title="-Y"><svg><use href="#vny"/></svg></button>
        <button class="b" title="-Z"><svg><use href="#vnz"/></svg></button>
        <button class="b gap" title="U" disabled><svg><use href="#vu"/></svg></button>
        <button class="b" title="V" disabled><svg><use href="#vv"/></svg></button>
        <button class="b" title="W" disabled><svg><use href="#vw"/></svg></button>
        <button class="b gap" title="-U" disabled><svg><use href="#vnu"/></svg></button>
        <button class="b" title="-V" disabled></button>
      </div>
      <div class="viewslabel">User-defined views:</div>
      <div class="viewlist"></div>
      <div class="btnrow eyes">
        <button class="b" title="New view"><svg><use href="#eyestar"/></svg></button>
        <button class="b gap" title="Assign" disabled><svg><use href="#eyeeq"/></svg></button>
        <button class="b" title="Refresh" disabled><svg><use href="#eyering"/></svg></button>
        <button class="b push" title="Delete view" disabled><svg><use href="#eyex"/></svg></button>
        <button class="b tight" title="Delete all" disabled><svg><use href="#bigx"/></svg></button>
      </div>
      <h2 class="vishead">Visibilities</h2>
      <div class="btnrow mics">
        <button class="b" title="By window" disabled><svg><use href="#micbox"/></svg></button>
        <button class="b" title="By selection" disabled><svg><use href="#micx"/></svg></button>
        <button class="b" title="Hide"><svg><use href="#micred"/></svg></button>
        <button class="b" title="By number"><svg><use href="#micnum"/></svg></button>
        <button class="b gap" title="Previous"><svg><use href="#micback"/></svg></button>
        <button class="b" title="Invert" disabled><svg><use href="#micring"/></svg></button>
        <button class="b gap" title="Cancel" disabled><svg><use href="#micx"/></svg></button>
      </div>
      <label class="check vischeck"><input type="checkbox"><span><u>V</u>isibilities:</span></label>
      <ul class="tree">
        <li><div class="row"><i class="ex minus"></i><input type="checkbox" class="mixed" aria-label="User-defined"><svg><use href="#folderopen"/></svg><span>User-defined</span></div>
          <ul class="sub trunk">
            <li><div class="row"><i class="ex minus"></i><input type="checkbox" checked aria-label="Floors"><svg><use href="#folderopen"/></svg><span>Floors</span></div>
              <ul class="sub">
                <li><div class="row leaf"><i></i><input type="checkbox" checked aria-label="F-01"><b class="c1"></b><span>F-01</span></div></li>
                <li><div class="row leaf"><i></i><input type="checkbox" checked aria-label="F-02"><b class="c2"></b><span>F-02</span></div></li>
                <li><div class="row leaf"><i></i><input type="checkbox" checked aria-label="F-03"><b class="c3"></b><span>F-03</span></div></li>
                <li><div class="row leaf"><i></i><input type="checkbox" checked aria-label="F-04"><b class="c4"></b><span>F-04</span></div></li>
                <li><div class="row leaf"><i></i><input type="checkbox" checked aria-label="F-05"><b class="c5"></b><span>F-05</span></div></li>
              </ul>
            </li>
          </ul>
        </li>
        <li><div class="row"><i class="ex minus"></i><input type="checkbox" class="mixed" aria-label="Generated"><svg><use href="#folderopen"/></svg><span>Generated</span></div>
          <ul class="sub">
            <li><div class="row"><i class="ex"></i><input type="checkbox" aria-label="Lines by Type"><svg><use href="#folder"/></svg><span>Lines by Type</span></div></li>
            <li><div class="row"><i class="ex"></i><input type="checkbox" aria-label="Lines with Support"><svg><use href="#folder"/></svg><span>Lines with Support</span></div></li>
            <li><div class="row"><i class="ex"></i><input type="checkbox" aria-label="Members by Cross-Section"><svg><use href="#folder"/></svg><span>Members by Cross-Section</span></div></li>
            <li><div class="row"><i class="ex"></i><input type="checkbox" aria-label="Members by Material"><svg><use href="#folder"/></svg><span>Members by Material</span></div></li>
            <li><div class="row"><i class="ex"></i><input type="checkbox" aria-label="Members by Type"><svg><use href="#folder"/></svg><span>Members by Type</span></div></li>
            <li><div class="row"><i class="ex"></i><input type="checkbox" aria-label="Nodes with Support"><svg><use href="#folder"/></svg><span>Nodes with Support</span></div></li>
            <li><div class="row"><i class="ex"></i><input type="checkbox" aria-label="Surfaces by Eccentricity"><svg><use href="#folder"/></svg><span>Surfaces by Eccentricity</span></div></li>
            <li><div class="row"><i class="ex"></i><input type="checkbox" aria-label="Surfaces by Geometry"><svg><use href="#folder"/></svg><span>Surfaces by Geometry</span></div></li>
            <li><div class="row"><i class="ex"></i><input type="checkbox" aria-label="Surfaces by Material"><svg><use href="#folder"/></svg><span>Surfaces by Material</span></div></li>
            <li><div class="row"><i class="ex"></i><input type="checkbox" aria-label="Surfaces by Stiffness"><svg><use href="#folder"/></svg><span>Surfaces by Stiffness</span></div></li>
            <li><div class="row"><i class="ex"></i><input type="checkbox" aria-label="Surfaces by Thickness"><svg><use href="#folder"/></svg><span>Surfaces by Thickness</span></div></li>
          </ul>
        </li>
      </ul>
      <div class="btnrow mics bottom">
        <button class="b" title="New visibility"><svg><use href="#micstar"/></svg></button>
        <button class="b gap" title="Add" disabled><svg><use href="#micplus"/></svg></button>
        <button class="b" title="Remove" disabled><svg><use href="#micminus"/></svg></button>
        <button class="b" title="Assign" disabled><svg><use href="#miceq"/></svg></button>
        <button class="b gap" title="Invert" disabled><svg><use href="#micring"/></svg></button>
        <button class="b gap picked" title="Union"><svg><use href="#sq"/></svg></button>
        <button class="b" title="Intersection" disabled><svg><use href="#sq"/></svg></button>
        <button class="b" title="Difference" disabled><svg><use href="#sq"/></svg></button>
      </div>
      <label class="check addcheck"><input type="checkbox" checked><span><u>A</u>dd new objects into visibility:</span></label>
      <select class="visselect" aria-label="Visibility" disabled></select>
    </div>
    <div class="navtabs">
      <a href="#"><svg viewBox="0 0 18 18"><path fill="#f0c52e" stroke="#8a6a10" d="M1.500 4.500h11v10h-11z"/><path fill="#fff" stroke="#468" d="M6.500 1.500h9v7h-9z"/><circle cx="9" cy="9" r="4" fill="#cfe4f8" stroke="#2d5596" stroke-width="1.500"/><path stroke="#2d5596" stroke-width="2" d="M12 12l4 5"/></svg>Data</a>
      <a href="#"><svg viewBox="0 0 18 18"><path fill="#fff" stroke="#2c5db5" stroke-width="1.500" d="M2 4h12v13H2z"/><path stroke="#2c5db5" stroke-width="1.500" d="M4 8h8M4 11h8M4 14h8"/><path fill="#b98a62" stroke="#5d4028" d="M5 3l6-3 6 1v5l-6 1z"/></svg>Display</a>
      <a href="#" class="cur"><svg viewBox="0 0 18 18"><path fill="#3560c4" d="M2 15h13v2H2zM10 1l4 2-4 8-4-3zM12 8c4 3 1 7-2 8H8v-2c4 0 4-2 3-4zM3 9l4 3-1 1-4-2z"/></svg>Views</a>
    </div>
  </aside>

  <main class="docarea">
    <div class="viewport">
      <svg class="model" viewBox="323 125 1594 643" preserveAspectRatio="xMinYMin slice">
        <defs>
          <g id="floor">
            <path class="slab" d="M527 232L670 205 761 237 954 202 1076 245 882 281 739 307 658 278z"/>
            <path class="back" d="M533 234L670 208 761 241 954 205 1072 246 1066 256 954 218 761 253 670 222 548 245z"/>
            <path class="rail" d="M531 234L670 207 761 239 954 204 1073 246"/>
            <path class="dark thin" d="M536 236L670 211 761 243 954 208 1070 249"/>
            <path class="band" d="M527 237L658 284 739 313 1076 250V262L739 325 658 296 527 248z"/>
            <path class="gapline" d="M530 235L658 281 739 310 1076 248"/>
            <path class="dark" d="M529 238L658 284 739 313 1074 251"/>
            <path class="edge" d="M527 232L670 205 761 237 954 202 1076 245M527 232L658 278 739 307 882 281 1076 245"/>
          </g>
          <g id="nodes" fill="#a31515"><path d="M525 230h5v4h-5zM668 203h5v4h-5zM656 276h5v4h-5z"/><path stroke="#888" d="M521 232h12M664 205h12M652 278h12"/></g>
          <g id="foot"><path fill="#1fee1f" d="M-4 0H4V4L11 11Q0 16-11 11L-4 4z"/><path fill="#19c619" d="M-11 11Q0 16 11 11L4 5H-4z" opacity=".5"/><circle r="2.500" cy="-1" fill="#b57070"/></g>
        </defs>
        <path class="colback" d="M664 205h12v402h-12zM755 237h12v100h-12zM949 202h11v120h-11z"/>
        <g class="f01" transform="translate(0 301)"><use href="#floor"/></g>
        <g class="f02" transform="translate(0 201)"><use href="#floor"/></g>
        <g class="f03" transform="translate(0 100)"><use href="#floor"/></g>
        <g class="f04"><use href="#floor"/></g>
        <path fill="none" stroke="#111" stroke-width="1.500" d="M527 232L658 278 739 307 882 281"/>
        <path class="incol" d="M664 208h12v83h-12zM755 240h12v70h-12zM949 206h11v62h-11z"/>
        <path class="incol" d="M664 310h12v80h-12zM664 411h12v80h-12zM664 511h12v80h-12z"/>
        <path fill="#dcdcdc" fill-opacity=".65" d="M856 241L876 248 904 243V310H856z"/>
        <path fill="none" stroke="#333" d="M856 241V310M876 249V310M904 244V310M884 236V310"/>
        <path fill="#8c8c8c" stroke="#86b81a" d="M856 241L884 236 904 244 876 249z"/>
        <path class="col" d="M522 234h11v399h-11zM652 280h12v400h-12zM734 306h11v402h-11zM1070 246h12v100h-12zM876 282h12v50h-12zM932 272h12v50h-12z"/>
        <path class="collight" d="M523 234h4v399h-4zM653 280h5v400h-5zM735 306h4v402h-4zM1071 246h5v100h-5zM877 282h4v50h-4zM933 272h4v50h-4z"/>
        <use href="#nodes"/>
        <g opacity=".55"><use href="#nodes" y="100"/><use href="#nodes" y="201"/><use href="#nodes" y="301"/></g>
        <path fill="#a31515" d="M759 235h5v4h-5zM952 200h5v4h-5zM1074 243h5v4h-5zM880 279h5v4h-5zM935 269h5v4h-5zM803 247h5v4h-5zM854 240h4v4h-4zM882 234h4v4h-4zM902 242h4v4h-4zM874 247h4v4h-4z"/>
        <use href="#foot" x="527" y="634"/><use href="#foot" x="658" y="680"/><use href="#foot" x="670" y="608"/><use href="#foot" x="739" y="709"/>
        <g class="triad">
          <path stroke="#1fd52a" stroke-width="2" d="M378 662l26-3"/><path fill="#1fd52a" d="M411 658l-9-3v7z"/>
          <path stroke="#e21414" stroke-width="2" d="M378 662l-18-5"/><path fill="#e21414" d="M353 655l10-1-2 7z"/>
          <path stroke="#1631d8" stroke-width="2" d="M378 662v32"/><path fill="#1631d8" d="M378 702l-4-9h8z"/>
          <text x="346" y="657" fill="#e21414">X</text><text x="416" y="661" fill="#1fd52a">Y</text><text x="375" y="715" fill="#1631d8">Z</text>
        </g>
      </svg>
      <span class="unit">[ft]</span>
    </div>

    <section class="tablepane">
      <div class="panehead"><span>1.1 Nodes</span><button aria-label="Pin"><svg><use href="#pin"/></svg></button><button aria-label="Close"><svg><use href="#x"/></svg></button></div>
      <div class="toolbar tabletools">
        <button class="t on" title="Graphics"><svg><use href="#t1"/></svg></button>
        <button class="t" title="Sort"><svg><use href="#t2"/></svg></button>
        <button class="t" title="Loads"><svg><use href="#t3"/></svg></button>
        <button class="t" title="Results"><svg><use href="#t4"/></svg></button>
        <button class="t off" title="Diagram"><svg><use href="#t5"/></svg></button>
        <i class="sep"></i>
        <button class="t" title="Previous table"><svg><use href="#t6"/></svg></button>
        <button class="t" title="Next table"><svg><use href="#t7"/></svg></button>
        <i class="sep"></i>
        <button class="t on" title="Synchronize selection"><svg><use href="#t8"/></svg></button>
        <button class="t on" title="Synchronize back"><svg><use href="#t9"/></svg></button>
        <button class="t off" title="Refresh"><svg><use href="#t10"/></svg></button>
        <i class="sep"></i>
        <button class="t off" title="Insert row"><svg><use href="#t11"/></svg></button>
        <button class="t off" title="Delete row"><svg><use href="#t12"/></svg></button>
        <button class="t off" title="Split row"><svg><use href="#t13"/></svg></button>
        <i class="sep"></i>
        <button class="t off" title="Clear"><svg><use href="#t14"/></svg></button>
        <i class="sep"></i>
        <button class="t" title="Remove all"><svg><use href="#t15"/></svg></button>
        <button class="t" title="Remove before"><svg><use href="#t16"/></svg></button>
        <button class="t" title="Remove after"><svg><use href="#t17"/></svg></button>
        <i class="sep"></i>
        <button class="t" title="Colors"><svg><use href="#t18"/></svg></button>
        <button class="t off" title="Selected only"><svg><use href="#t19"/></svg></button>
        <i class="sep"></i>
        <button class="t off" title="Mark"><svg><use href="#t20"/></svg></button>
        <i class="sep"></i>
        <button class="t" title="Properties"><svg><use href="#t21"/></svg></button>
        <button class="t" title="View"><svg><use href="#glass"/></svg></button>
        <button class="t" title="Excel"><svg><use href="#xls"/></svg></button>
        <button class="t" title="Calculator"><svg><use href="#calc"/></svg></button>
        <i class="sep"></i>
        <button class="t" title="Parameters"><svg><use href="#abw"/></svg></button>
        <button class="t" title="Formula"><svg><use href="#fx"/></svg></button>
        <button class="t" title="Delete formula"><svg><use href="#fxx"/></svg></button>
        <i class="sep"></i>
        <button class="t" title="Unlock"><svg><use href="#lock"/></svg></button>
      </div>
      <div class="sheet">
        <table>
          <colgroup><col class="w-no"><col class="w-a"><col class="w-b"><col class="w-c"><col class="w-d"><col class="w-d"><col class="w-d"><col></colgroup>
          <thead>
            <tr class="letters"><th rowspan="3" class="corner">Node<br>No.</th><th class="sel">A</th><th>B</th><th>C</th><th>D</th><th>E</th><th>F</th><th>G</th></tr>
            <tr class="names"><td></td><td>Reference</td><td>Coordinate</td><td colspan="3">Node Coordinates</td><td></td></tr>
            <tr class="names units"><td>Node Type</td><td>Node</td><td>System</td><td>X [ft]</td><td>Y [ft]</td><td>Z [ft]</td><td>Comment</td></tr>
          </thead>
          <tbody>
            <tr><th class="sel">1</th><td class="focus">Standard</td><td class="mid">0</td><td><u>C</u>artesian</td><td class="num">-0.3</td><td class="num">-0.6</td><td class="num">-40.0</td><td></td></tr>
            <tr><th>2</th><td>Standard</td><td class="mid">0</td><td><u>C</u>artesian</td><td class="num">-0.3</td><td class="num">-0.6</td><td class="num">-30.0</td><td></td></tr>
            <tr><th>3</th><td>Standard</td><td class="mid">0</td><td><u>C</u>artesian</td><td class="num">-0.3</td><td class="num">-0.6</td><td class="num">-20.0</td><td></td></tr>
          </tbody>
        </table>
        <div class="vscroll">
          <svg viewBox="0 0 12 12"><path fill="none" stroke="#444" stroke-width="2" d="M2 8l4-4 4 4"/></svg>
          <i></i>
          <svg viewBox="0 0 12 12"><path fill="none" stroke="#444" stroke-width="2" d="M2 4l4 4 4-4"/></svg>
        </div>
      </div>
      <div class="sheettabs">
        <a href="#" class="cur">Nodes</a><a href="#">Lines</a><a href="#">Materials</a><a href="#">Surfaces</a><a href="#">Solids</a><a href="#">Openings</a><a href="#">Nodal Supports</a><a href="#">Line Supports</a><a href="#">Surface Supports</a><a href="#">Line Hinges</a><a href="#">Cross-Sections</a><a href="#">Member Hinges</a><a href="#">Member Eccentricities</a><a href="#">Member Divisions</a><a href="#">Members</a><a href="#">Ribs</a><a href="#">Member Elastic Foundations</a>
        <div class="tabnav">
          <button aria-label="First" disabled><svg viewBox="0 0 10 10"><path d="M1 1h1.500v8H1zM8 1v8L3.500 5z"/></svg></button>
          <button aria-label="Previous" disabled><svg viewBox="0 0 10 10"><path d="M7 1v8L2.500 5z"/></svg></button>
          <button aria-label="Next"><svg viewBox="0 0 10 10"><path d="M3 1v8l4.500-4z"/></svg></button>
          <button aria-label="Last"><svg viewBox="0 0 10 10"><path d="M2 1v8l4.500-4zM7.500 1H9v8H7.500z"/></svg></button>
        </div>
      </div>
    </section>
  </main>
</div>

<footer class="statusbar">
  <span class="st">SNAP</span><span class="st up">GRID</span><span class="st wide">CARTES</span><span class="st">OSNAP</span><span class="st">GLINES</span><span class="st">DXF</span>
  <div class="cells"><i></i><i></i><i></i><i></i></div>
</footer>

<!-- floating control panel -->
<section class="panel">
  <div class="panelbox">
    <div class="panehead"><span>Panel</span><button aria-label="Close"><svg><use href="#x"/></svg></button></div>
    <div class="panelbody">
      <div class="panellabel">User-Defined Visibilities</div>
      <ul class="legend">
        <li class="sel"><b class="c1"></b>Floors - F-01</li>
        <li><b class="c2"></b>Floors - F-02</li>
        <li><b class="c3"></b>Floors - F-03</li>
        <li><b class="c4"></b>Floors - F-04</li>
        <li><b class="c5"></b>Floors - F-05</li>
      </ul>
      <button class="b" title="Panel options"><svg viewBox="0 0 24 24"><path fill="#8b7f74" stroke="#4a423a" d="M2 3q5-3 10 0v14q-5 3-10 0z"/><path stroke="#f2eee8" stroke-width="2.500" d="M7.500 3v14"/><path fill="none" stroke="#555" stroke-width="2" d="M13 8l3-5h5v4"/><path fill="#fff" stroke="#666" d="M13.500 10.500h6l3 3v9h-9z"/><path stroke="#777" d="M15 15.500h5M15 18.500h5"/></svg></button>
    </div>
  </div>
  <div class="paneltabs"><a href="#" aria-label="Color scale"><svg viewBox="0 0 14 14"><path stroke="#333" fill="#00f" d="M.500.500h13v3H.500z"/><path stroke="#333" fill="#0f0" d="M.500 5.500h13v3H.500z"/><path stroke="#333" fill="#f00" d="M.500 10.500h13v3H.500z"/></svg></a></div>
</section>

<!-- color picker -->
<section class="dialog" role="dialog" aria-label="Color">
  <div class="dlgtitle"><span>Color</span><button aria-label="Close"><svg viewBox="0 0 12 12"><path stroke="#111" stroke-width="1.200" d="M0 0l12 12M12 0L0 12"/></svg></button></div>
  <div class="dlgbody">
    <div class="dlgleft">
      <div class="dlglabel"><u>B</u>asic colors:</div>
      <div class="swatches basic">
        <button class="cur" style="background:#ff8080"></button><button style="background:#ffff80"></button><button style="background:#80ff80"></button><button style="background:#00ff80"></button><button style="background:#80ffff"></button><button style="background:#0080ff"></button><button style="background:#ff80c0"></button><button style="background:#ff80ff"></button>
        <button style="background:#ff0000"></button><button style="background:#ffff00"></button><button style="background:#80ff00"></button><button style="background:#00ff40"></button><button style="background:#00ffff"></button><button style="background:#0080c0"></button><button style="background:#8080c0"></button><button style="background:#ff00ff"></button>
        <button style="background:#804040"></button><button style="background:#ff8040"></button><button style="background:#00ff00"></button><button style="background:#008080"></button><button style="background:#004080"></button><button style="background:#8080ff"></button><button style="background:#800040"></button><button style="background:#ff0080"></button>
        <button style="background:#800000"></button><button style="background:#ff8000"></button><button style="background:#008000"></button><button style="background:#008040"></button><button style="background:#0000ff"></button><button style="background:#0000a0"></button><button style="background:#800080"></button><button style="background:#8000ff"></button>
        <button style="background:#400000"></button><button style="background:#804000"></button><button style="background:#004000"></button><button style="background:#004040"></button><button style="background:#000080"></button><button style="background:#000040"></button><button style="background:#400040"></button><button style="background:#400080"></button>
        <button style="background:#000000"></button><button style="background:#808000"></button><button style="background:#808040"></button><button style="background:#808080"></button><button style="background:#408080"></button><button style="background:#c0c0c0"></button><button style="background:#400040"></button><button style="background:#ffffff"></button>
      </div>
      <div class="dlglabel"><u>C</u>ustom colors:</div>
      <div class="swatches custom">
        <button></button><button></button><button></button><button></button><button></button><button></button><button></button><button></button>
        <button></button><button></button><button></button><button></button><button></button><button></button><button></button><button></button>
      </div>
      <button class="dlgbtn" disabled><u>D</u>efine Custom Colors &gt;&gt;</button>
      <div class="dlgrow"><button class="dlgbtn main">OK</button><button class="dlgbtn">Cancel</button></div>
    </div>
    <div class="dlgright">
      <div class="pickers">
        <div class="spectrum"><i class="h l"></i><i class="v"></i><i class="h r"></i></div>
        <div class="lumbar"></div>
        <svg class="lumarrow" viewBox="0 0 10 20"><path d="M10 0v20L0 10z"/></svg>
      </div>
      <div class="values">
        <div class="preview"><div class="sample"></div><span>Color|S<u>o</u>lid</span></div>
        <div class="fields">
          <label for="hue">Hu<u>e</u>:</label><input id="hue" value="147"><label for="red"><u>R</u>ed:</label><input id="red" value="102">
          <label for="sat"><u>S</u>at:</label><input id="sat" value="240"><label for="green"><u>G</u>reen:</label><input id="green" value="153">
          <label for="lum"><u>L</u>um:</label><input id="lum" value="168"><label for="blue">Bl<u>u</u>e:</label><input id="blue" value="255">
        </div>
      </div>
      <button class="dlgbtn"><u>A</u>dd to Custom Colors</button>
    </div>
  </div>
</section>

<!-- callout -->
<div class="callout"></div>
<svg class="arrow" viewBox="0 0 200 100"><path stroke="#c00000" stroke-width="4" d="M194 3L16 83"/><path fill="#c00000" d="M3 89L13 76 19 89z"/></svg>

</body>
</html>
```
FILE: styles.css
```css
* {
  box-sizing: border-box;
}
html, body {
  height: 100%;
}
body {
  margin: 0;
  display: flex;
  flex-direction: column;
  overflow: hidden;
  background: #d0d4dd;
  font: 13px "Liberation Sans", Arial, sans-serif;
  color: #000;
}
button {
  font: inherit;
  padding: 0;
  margin: 0;
  border: 0;
  background: none;
  color: inherit;
}
a {
  color: inherit;
  text-decoration: none;
}
ul {
  list-style: none;
  margin: 0;
  padding: 0;
}
u {
  text-underline-offset: 2px;
}
svg {
  display: block;
}
.defs {
  display: none;
}

/* svg lettering */
.ser { font: bold 10px "Liberation Serif", serif; fill: #555; }
.let { font: 14px "Liberation Serif", serif; fill: #222; }
.num12 { font: bold 8px "Liberation Sans", sans-serif; }
.abt { font: italic bold 11px "Liberation Serif", serif; }
.fxt { font: italic 22px "Liberation Serif", serif; fill: #666; }
.fxs { font: italic 15px "Liberation Serif", serif; fill: #666; }
.five { font: bold 15px "Liberation Sans", sans-serif; fill: #f2c21a; stroke: #5c4300; stroke-width: 1px; paint-order: stroke; }

/* title bar */
.titlebar {
  flex: none;
  height: 29px;
  background: #fff;
  display: flex;
  align-items: center;
  padding: 0 14px 0 2px;
}
.applogo {
  width: 19px;
  height: 22px;
}
.apptitle {
  margin-left: 6px;
  flex: 1;
  font: 14px "Open Sans", sans-serif;
  color: #999;
}
.winbtns {
  display: flex;
  gap: 2px;
}
.winbtns button {
  width: 57px;
  height: 28px;
  display: flex;
  justify-content: center;
  align-items: center;
}
.winbtns svg {
  width: 12px;
  height: 12px;
}
.winbtns button:last-child {
  width: 36px;
  margin-left: 10px;
}

/* menu */
.menubar {
  flex: none;
  height: 31px;
  display: flex;
  align-items: center;
  padding: 0 6px 2px 4px;
  font: 13px "Open Sans", sans-serif;
  color: #3f4651;
}
.grip {
  flex: none;
  width: 2px;
  height: 18px;
  background: repeating-linear-gradient(#8f95a2 0 2px, #fff 2px 3px, transparent 3px 4px);
}
.menubar .grip {
  height: 14px;
}
.doclogo {
  width: 20px;
  height: 17px;
  margin: 0 11px 0 4px;
}
.menubar a {
  margin-right: 15px;
}
.mdibtns {
  margin-left: auto;
  padding-top: 3px;
  display: flex;
  gap: 11px;
}
.mdibtns svg {
  width: 10px;
  height: 10px;
}

/* tool bars */
.toolrow {
  flex: none;
  height: 31px;
  display: flex;
  gap: 1px;
}
.toolbar {
  height: 31px;
  display: flex;
  align-items: center;
  padding: 0 2px 0 4px;
  background: linear-gradient(#e9edf7, #dde1eb 60%, #cfd3de);
  border-bottom: 1px solid #a4a8b4;
  border-radius: 3px;
}
.toolbar .grip {
  margin-right: 4px;
}
.t {
  flex: none;
  width: 28px;
  height: 28px;
  display: flex;
  align-items: center;
  justify-content: center;
}
.t svg {
  width: 22px;
  height: 22px;
}
.t.on {
  background: linear-gradient(#fbd9a5, #fdae4a 45%, #ffe584);
  border: 1px solid #b5a68a;
  border-radius: 2px;
}
.t.off svg {
  opacity: .5;
}
.sep {
  flex: none;
  width: 2px;
  height: 20px;
  margin: 0 3px;
  background: #a9aebb;
  border-right: 1px solid #fff;
}
.row2 .sep {
  margin: 0 4px;
}
.row2 .results .sep {
  margin: 0 3px;
}
.dd {
  flex: none;
  width: 14px;
  height: 28px;
  display: flex;
  align-items: center;
  justify-content: center;
}
.dd::after {
  content: "";
  border: 3px solid transparent;
  border-top: 4px solid #6d717b;
  border-bottom: 0;
}
.loadcase {
  width: 216px;
  height: 22px;
  margin: 0 2px;
  padding: 0 4px;
  border: 0;
  border-radius: 0;
  appearance: none;
  font: 13px "Noto Sans", sans-serif;
  color: #000;
  background: conic-gradient(#6d717b 0 0) right 6px top 9px / 7px 1px no-repeat,
    conic-gradient(#6d717b 0 0) right 7px top 10px / 5px 1px no-repeat,
    conic-gradient(#6d717b 0 0) right 8px top 11px / 3px 1px no-repeat,
    linear-gradient(#d5d9e3, #d5d9e3) right 1px center / 17px 20px no-repeat, #fff;
}

/* work area */
.workspace {
  flex: 1;
  min-height: 0;
  display: flex;
}
.panehead {
  flex: none;
  height: 29px;
  display: flex;
  align-items: center;
  gap: 7px;
  padding: 0 4px 1px 3px;
  background: #b9c0ca;
  border: 1px solid #e8ecf5;
  font: 13px "Open Sans", sans-serif;
  color: #4a4f57;
}
.panehead span {
  flex: 1;
}
.panehead svg {
  width: 12px;
  height: 12px;
}
.navigator {
  flex: none;
  width: 317px;
  display: flex;
  flex-direction: column;
}
.navbody {
  flex: 1;
  min-height: 0;
  margin-top: 3px;
  display: flex;
  flex-direction: column;
  background: #f7f7f7;
  border: 3px solid #d8ddec;
  border-width: 3px 5px 3px 5px;
  outline: 1px solid #9aa0b0;
  outline-offset: -3px;
  overflow: hidden;
}
.btnrow {
  flex: none;
  display: flex;
  gap: 6px;
  padding: 0 5px;
  overflow: hidden;
}
.b {
  flex: none;
  width: 34px;
  height: 26px;
  display: flex;
  align-items: center;
  justify-content: center;
  background: #e3e3e3;
  border: 1px solid #adadad;
}
.b svg {
  width: 22px;
  height: 22px;
}
.b:disabled {
  background: #ccc;
  border-color: #bfbfbf;
}
.b:disabled svg {
  filter: grayscale(1);
  opacity: .4;
}
.btnrow.top {
  padding-top: 5px;
  padding-right: 0;
}
.top .gap, .eyes .gap {
  margin-left: 6px;
}
.viewslabel {
  flex: none;
  height: 41px;
  padding: 17px 4px 0;
  font-size: 14px;
}
.viewlist {
  flex: none;
  height: 132px;
  background: #fcfcf4;
  border: 1px solid #7b7f88;
  border-top: 2px solid #8d90b8;
}
.eyes {
  height: 35px;
  padding: 4px 4px 0 3px;
  border-bottom: 1px solid #a9a9ee;
}
.eyes .push {
  margin-left: auto;
}
.eyes .tight {
  margin-left: -2px;
}
.vishead {
  flex: none;
  margin: 6px 0 0;
  height: 20px;
  padding-left: 3px;
  border-top: 1px solid #999;
  background: #d9e5fd;
  font-size: 14px;
  font-weight: normal;
  line-height: 19px;
  color: #00006e;
}
.mics {
  padding-top: 6px;
}
.mics .b {
  width: 29px;
}
.mics .gap {
  margin-left: 5px;
}
.check {
  flex: none;
  display: flex;
  align-items: center;
  gap: 3px;
  padding-left: 4px;
  font: 12px "Noto Sans", sans-serif;
}
input[type=checkbox] {
  flex: none;
  appearance: none;
  width: 13px;
  height: 13px;
  margin: 0;
  border: 1px solid #333;
  background: linear-gradient(135deg, #fff, #ccd3df);
  display: flex;
  align-items: center;
  justify-content: center;
}
.check input[type=checkbox] {
  width: 16px;
  height: 16px;
  background: #fff;
}
input:checked::after {
  content: "";
  width: 8px;
  height: 4px;
  margin-top: -3px;
  border: solid #111;
  border-width: 0 0 2px 2px;
  transform: rotate(-45deg);
}
.check input:checked::after {
  border-width: 0 0 1px 1px;
  width: 10px;
  height: 5px;
}
.mixed::after {
  content: "";
  width: 7px;
  height: 7px;
  background: #8d8d8d;
}
.vischeck {
  height: 41px;
  padding-top: 9px;
}
.addcheck {
  height: 38px;
  padding-top: 12px;
}
.tree {
  flex: 1;
  min-height: 0;
  padding: 1px 0 0 7px;
  background: #fcfcf4;
  border: 1px solid #7b7f88;
  font: 12px "Noto Sans", sans-serif;
  overflow: hidden;
}
.row {
  display: flex;
  align-items: center;
  height: 18px;
  line-height: 18px;
}
.row svg {
  width: 16px;
  height: 14px;
  margin: 0 4px 0 3px;
}
.row > i {
  flex: none;
  width: 11px;
  height: 11px;
  margin-right: 7px;
}
.ex {
  border: 1px solid #8b8f98;
  border-radius: 1px;
  background: conic-gradient(#23489a 0 0) center / 7px 1px no-repeat, conic-gradient(#23489a 0 0) center / 1px 7px no-repeat, #f6f6f4;
}
.ex.minus {
  background: conic-gradient(#23489a 0 0) center / 7px 1px no-repeat, #f6f6f4;
}
.sub {
  margin-left: 5px;
  padding-left: 13px;
  border-left: 1px dotted transparent;
}
.trunk {
  border-left-color: #555;
}
.sub .row {
  background: repeating-linear-gradient(#555 0 1px, transparent 1px 2px) 5px 0 / 1px 100% no-repeat;
}
.sub > li:last-child > .row {
  background-size: 1px 50%;
}
.leaf > i {
  height: 1px;
  border-bottom: 1px dotted #555;
  margin: 0 1px 0 6px;
}
.leaf b {
  width: 11px;
  height: 11px;
  margin: 0 5px 0 7px;
  border: 1px solid #000;
}
.c1 { background: #6699ff; }
.c2 { background: #f7c600; }
.c3 { background: #b97070; }
.c4 { background: #76b900; }
.c5 { background: #ff0000; }
.picked {
  background: #cce8ff;
  border-color: #0b5fa5;
}
.visselect {
  flex: none;
  height: 25px;
  margin: 0 4px 9px;
  appearance: none;
  border: 1px solid #adadad;
  border-radius: 0;
  opacity: 1;
  background: url("data:image/svg+xml,%3Csvg xmlns='http://www.w3.org/2000/svg' width='10' height='6'%3E%3Cpath d='M1 0l4 4 4-4' fill='none' stroke='%23444'/%3E%3C/svg%3E") right 5px center no-repeat, #e0e0e0;
}
.navtabs {
  flex: none;
  height: 30px;
  display: flex;
  gap: 10px;
  padding-left: 5px;
  font: 13px "Open Sans", sans-serif;
  color: #4a4f57;
}
.navtabs a {
  height: 28px;
  display: flex;
  align-items: center;
  gap: 1px;
}
.navtabs svg {
  width: 17px;
  height: 17px;
}
.navtabs .cur {
  height: 27px;
  padding: 1px 4px 0 3px;
  background: linear-gradient(#dde1ea, #fff);
  border: 1px solid #bdeef2;
  border-top: 0;
  border-radius: 0 0 5px 5px;
}

.docarea {
  flex: 1;
  min-width: 0;
  margin: 2px 0 0 4px;
  display: flex;
  flex-direction: column;
}
.viewport {
  flex: 1;
  min-height: 0;
  margin-right: 1px;
  position: relative;
  overflow: hidden;
  background: #fff;
  border-top: 1px solid #666;
  border-left: 2px solid #666;
}
.model {
  width: 1594px;
  height: 643px;
}
.unit {
  position: absolute;
  right: 10px;
  bottom: 6px;
  font: 11px "Noto Sans", sans-serif;
}
.slab { fill: var(--slab); }
.back { fill: var(--back); }
.band { fill: var(--band); }
.rail { fill: none; stroke: var(--rail); stroke-width: 2; }
.gapline { fill: none; stroke: #fff; stroke-width: 2; }
.dark { fill: none; stroke: var(--dark); stroke-width: 2; }
.dark.thin { stroke-width: 1; }
.edge { fill: none; stroke: var(--edge); stroke-width: 1; }
.f01 { --slab: #7590c5; --back: #5079c2; --band: #97bdff; --rail: #8098c4; --dark: #4567a8; --edge: #6699ff; }
.f02 { --slab: #bfa640; --back: #a98e28; --band: #ffe34b; --rail: #bda33c; --dark: #a58716; --edge: #f7c600; }
.f03 { --slab: #9f7a7a; --back: #925a5a; --band: #db9f9f; --rail: #a08080; --dark: #8a5353; --edge: #c87878; }
.f04 { --slab: #939393; --back: #778457; --band: #b0ea45; --rail: #979797; --dark: #5f8a12; --edge: #86b81a; }
.colback { fill: #b8b8b8; }
.incol { fill: #6e6e6e; fill-opacity: .3; }
.col { fill: #a9a9a9; fill-opacity: .85; }
.collight { fill: #c8c8c8; fill-opacity: .6; }
.triad text { font: bold 10px "Liberation Sans", sans-serif; }

/* table pane */
.tablepane {
  flex: none;
  margin-top: 4px;
  display: flex;
  flex-direction: column;
  background: #f0f0f0;
}
.tablepane .panehead {
  border-width: 2px 0 0 1px;
}
.tabletools {
  border-radius: 0;
  border-bottom: 0;
  padding-left: 9px;
}
.sheet {
  display: flex;
  height: 129px;
  padding: 2px 4px 0 2px;
  border-top: 2px solid #666;
  border-left: 1px solid #666;
}
.sheet table {
  flex: 1;
  table-layout: fixed;
  border-collapse: collapse;
  width: 0;
  height: 112px;
  border-top: 1px solid #666;
}
.w-no { width: 53px; }
.w-a { width: 99px; }
.w-b { width: 86px; }
.w-c { width: 108px; }
.w-d { width: 93px; }
.sheet th, .sheet td {
  padding: 0 4px;
  font-weight: normal;
  text-align: left;
  border: 1px solid #9c9c9c;
  background: #fff;
  line-height: 16px;
  height: 19px;
}
.sheet th {
  text-align: center;
  background: #e1e1e1;
  box-shadow: inset 1px 1px #fff, inset -1px -1px #999;
}
.sheet th.sel {
  background: #0078d7;
  color: #fff;
}
.sheet .letters th {
  height: 17px;
  border-bottom-color: #666;
}
.sheet th.corner {
  background: #e1e1e1;
  box-shadow: none;
}
.sheet .names td {
  background: #f0f0f0;
  text-align: center;
  border-top: 0;
  border-bottom: 0;
}
.sheet .units td {
  border-bottom: 1px solid #9c9c9c;
  height: 20px;
}
.sheet .mid {
  text-align: center;
}
.sheet .num {
  text-align: right;
}
.sheet .focus {
  outline: 1px dotted #000;
  outline-offset: -2px;
}
.vscroll {
  width: 19px;
  height: 112px;
  margin-left: 2px;
  display: flex;
  flex-direction: column;
  align-items: center;
}
.vscroll svg {
  width: 12px;
  height: 20px;
}
.vscroll i {
  width: 19px;
  height: 21px;
  margin-bottom: auto;
  background: #cdcdcd;
}
.sheettabs {
  display: flex;
  height: 42px;
  align-items: flex-start;
  border-top: 2px solid #777;
}
.sheettabs a {
  height: 18px;
  padding: 0 6px;
  line-height: 16px;
  white-space: nowrap;
  background: #e3e3e3;
  border: 1px solid #666;
  border-top: 0;
  border-left: 0;
  border-radius: 0 0 4px 4px;
}
.sheettabs .cur {
  margin-top: -2px;
  height: 20px;
  padding: 1px 8px 0 4px;
  background: #f0f0f0;
}
.tabnav {
  margin-left: auto;
  display: flex;
}
.tabnav button {
  width: 18px;
  height: 18px;
  display: flex;
  align-items: center;
  justify-content: center;
  border: 1px solid #fff;
  border-right-color: #777;
  border-bottom-color: #777;
}
.tabnav svg {
  width: 10px;
  height: 10px;
}
.tabnav :disabled {
  fill: #999;
}

/* status bar */
.statusbar {
  flex: none;
  height: 27px;
  display: flex;
  align-items: flex-start;
  justify-content: flex-end;
  padding-top: 1px;
  border-top: 1px solid #a9aeb8;
  background: linear-gradient(#d9dde5, #c9cdd6 25%, #a8adb7 40%, #b9bdc6);
  color: #222;
}
.st {
  height: 24px;
  padding: 1px 3px 0 2px;
  border: 1px solid #fff;
  border-top: 2px solid #111;
  border-left: 2px solid #111;
  margin-right: 1px;
}
.st.up {
  border: 1px solid #fff;
  border-right-color: #999;
  border-bottom-color: #999;
  padding-right: 5px;
}
.st.wide {
  padding-left: 6px;
}
.cells {
  width: 497px;
  height: 24px;
  display: flex;
  justify-content: flex-end;
  padding-right: 72px;
  gap: 77px;
}
.cells i {
  width: 1px;
  background: #9a9eaa;
}

/* floating panel */
.panel {
  position: absolute;
  left: 1375px;
  top: 167px;
  width: 213px;
  padding: 3px 3px 3px 2px;
  background: #e8ecf6;
  border: 1px solid #d0d4dd;
  border-right: 2px solid #7d828c;
  border-bottom: 2px solid #7d828c;
}
.panelbox {
  border: 1px solid #9aa0ae;
  border-bottom-width: 2px;
}
.panel .panehead {
  height: 28px;
  border: 0;
  padding: 0 3px 1px 1px;
  font-weight: bold;
}
.panel .panehead svg {
  width: 10px;
  height: 10px;
}
.panelbody {
  padding: 11px 6px 8px;
  background: #f0f0f0;
}
.panellabel {
  height: 18px;
  font-size: 11px;
}
.legend {
  height: 498px;
  padding: 1px 2px 0;
  margin-bottom: 6px;
  background: #fff;
  border-top: 1px solid #888;
  border-left: 1px solid #888;
  font: 13px "Noto Sans", sans-serif;
}
.legend li {
  height: 24px;
  margin-bottom: 1px;
  display: flex;
  align-items: center;
  gap: 5px;
  padding-left: 2px;
  border: 1px solid transparent;
}
.legend b {
  width: 20px;
  height: 20px;
  margin-top: -3px;
  border: 1px solid #d8d8d8;
}
.legend .sel {
  background: #ffffe1;
  border-color: #dcdccc;
}
.panel .b {
  width: 29px;
}
.paneltabs {
  height: 29px;
  padding-left: 3px;
  background: #d0d4dd;
}
.paneltabs a {
  display: flex;
  justify-content: center;
  align-items: center;
  width: 24px;
  height: 26px;
  background: #f2f4f8;
  border: 1px solid #bdeef2;
  border-radius: 0 0 4px 4px;
}
.paneltabs svg {
  width: 14px;
  height: 14px;
}

/* color dialog */
.dialog {
  position: absolute;
  left: 721px;
  top: 302px;
  width: 598px;
  background: #f0f0f0;
  border: 1px solid #6a6a6a;
  box-shadow: 0 4px 14px 2px rgba(0, 0, 0, .35);
}
.dlgtitle {
  height: 31px;
  display: flex;
  align-items: center;
  justify-content: space-between;
  padding: 0 15px 0 3px;
  background: #fff;
  font: 14px "Open Sans", sans-serif;
}
.dlgtitle svg {
  width: 12px;
  height: 12px;
}
.dlgbody {
  display: flex;
  gap: 21px;
  padding: 8px 9px 8px 9px;
}
.dlgleft {
  width: 274px;
  display: flex;
  flex-direction: column;
}
.dlglabel {
  height: 23px;
  line-height: 18px;
  margin-left: -1px;
}
.swatches {
  display: grid;
  grid-template-columns: repeat(8, 27px);
  gap: 5px 8px;
  padding-left: 3px;
}
.swatches button {
  height: 22px;
  background: #fff;
  border: 1px solid #a0a0a0;
  border-right-color: #fff;
  border-bottom-color: #fff;
  box-shadow: inset 1px 1px #696969, inset -1px -1px #e3e3e3;
}
.swatches .cur {
  box-shadow: inset 1px 1px #696969, 0 0 0 1px #000;
  outline: 1px dotted #000;
  outline-offset: 2px;
}
.basic {
  margin-bottom: 24px;
}
.custom {
  margin-bottom: 17px;
}
.dlgbtn {
  height: 26px;
  background: #e1e1e1;
  border: 1px solid #adadad;
}
.dlgbtn:disabled {
  background: #ccc;
  border-color: #bfbfbf;
  color: #838383;
}
.dlgrow {
  display: flex;
  gap: 10px;
  margin-top: 6px;
}
.dlgrow .dlgbtn {
  width: 86px;
}
.dlgbtn.main {
  border: 2px solid #0078d7;
}
.dlgright {
  flex: 1;
  display: flex;
  flex-direction: column;
}
.pickers {
  display: flex;
}
.spectrum {
  width: 235px;
  height: 231px;
  position: relative;
  background: linear-gradient(rgba(128, 128, 128, 0), #808080),
    linear-gradient(90deg, #f00, #ff0 17%, #0f0 33%, #0ff 50%, #00f 67%, #f0f 83%, #f00);
  border-top: 1px solid #999;
}
.spectrum i {
  position: absolute;
  background: #000;
}
.spectrum .h {
  top: 0;
  width: 5px;
  height: 2px;
}
.spectrum .l { left: 134px; }
.spectrum .r { left: 148px; }
.spectrum .v {
  left: 142px;
  top: 5px;
  width: 3px;
  height: 5px;
}
.lumbar {
  width: 15px;
  height: 231px;
  margin-left: 21px;
  background: linear-gradient(#fff, #0053ff 50%, #000 98%);
  border: 1px solid #999;
  border-width: 1px 0 0 1px;
}
.lumarrow {
  width: 10px;
  height: 20px;
  margin: 60px 0 0 2px;
}
.values {
  display: flex;
  margin: 9px 0 5px;
}
.preview {
  width: 79px;
  text-align: center;
}
.sample {
  height: 51px;
  margin-bottom: 4px;
  background: #6699ff;
  border: 1px solid #999;
  border-right-color: #fff;
  border-bottom-color: #fff;
}
.fields {
  display: grid;
  grid-template-columns: 45px 36px 64px 36px;
  gap: 4px 3px;
  align-items: center;
  text-align: right;
}
.fields input {
  width: 36px;
  height: 24px;
  padding: 0 2px 2px;
  border: 1px solid #6e6e6e;
  font: inherit;
}

/* callout over the floor legend */
.callout {
  position: absolute;
  left: 1376px;
  top: 226px;
  width: 136px;
  height: 33px;
  border: 3px solid #c00000;
  filter: drop-shadow(3px 4px 2px rgba(0, 0, 0, .4));
}
.arrow {
  position: absolute;
  left: 1178px;
  top: 239px;
  width: 200px;
  height: 100px;
  pointer-events: none;
  filter: drop-shadow(3px 4px 2px rgba(0, 0, 0, .4));
}
```
